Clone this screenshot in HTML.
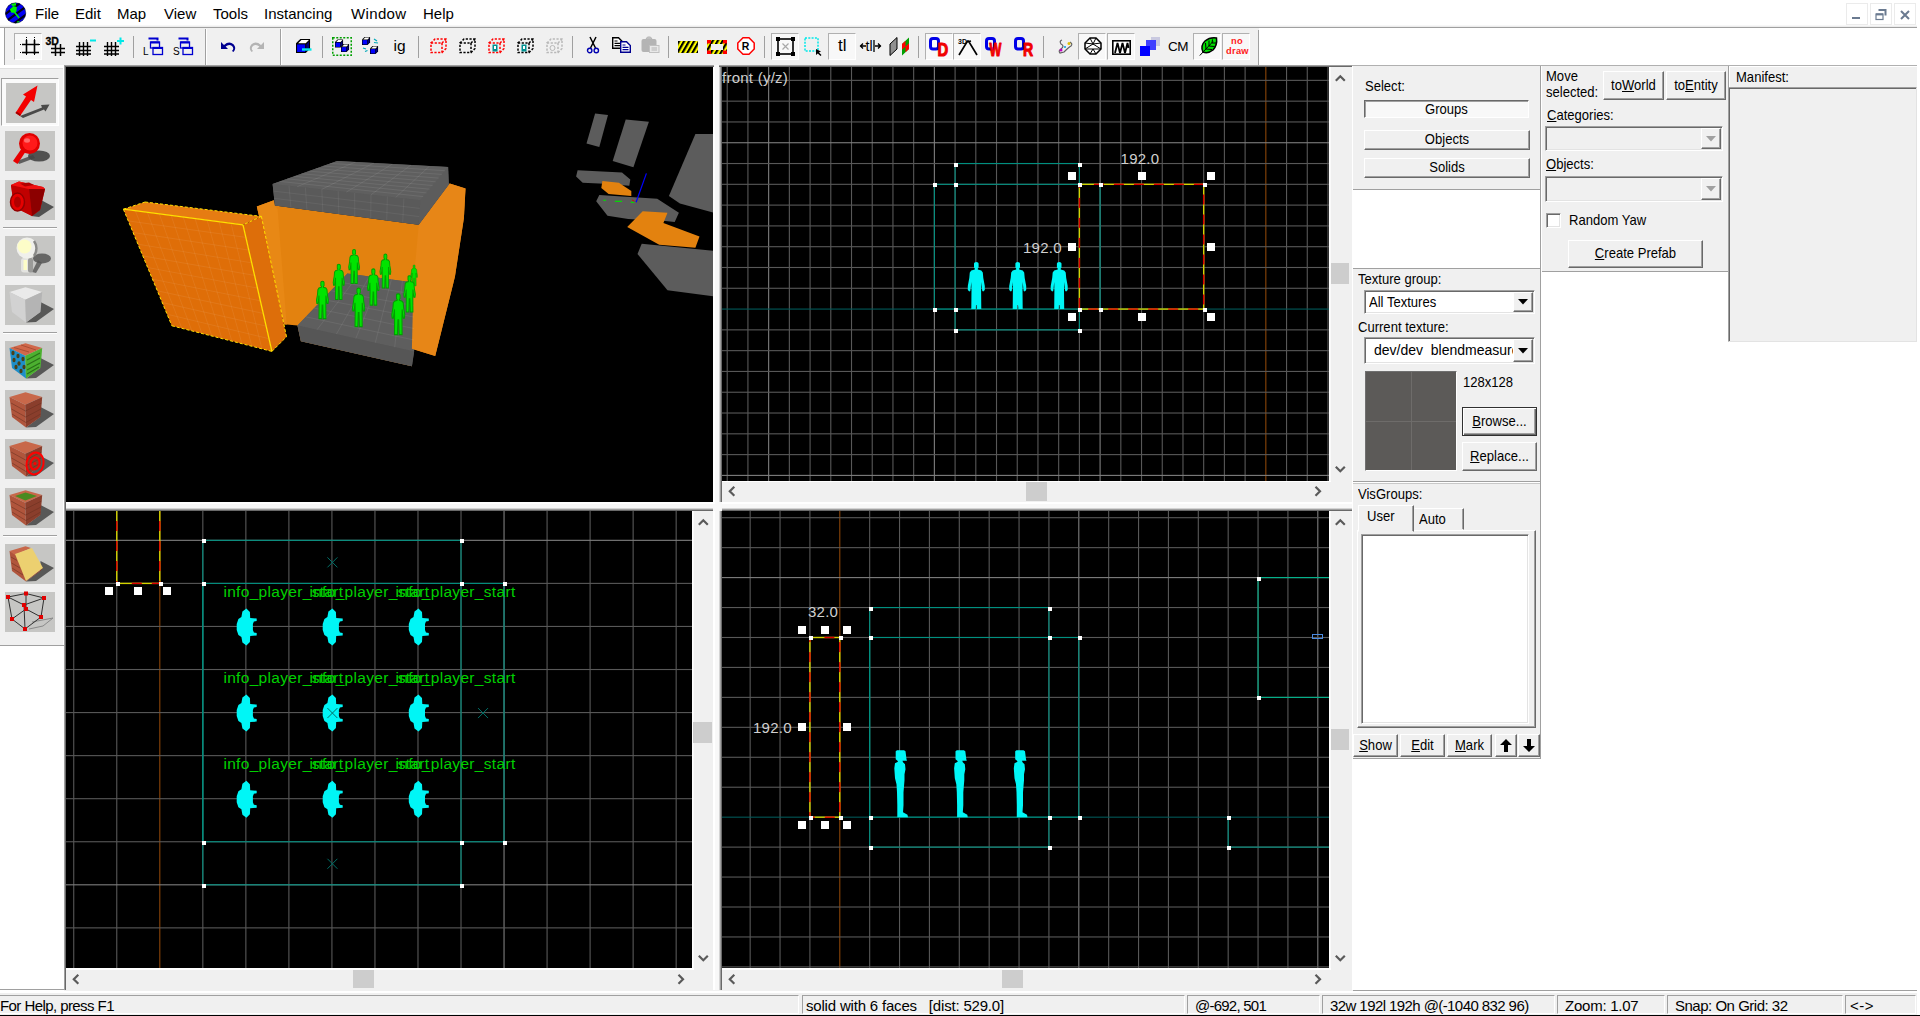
<!DOCTYPE html>
<html><head><meta charset="utf-8"><title>Hammer</title>
<style>
*{box-sizing:border-box;margin:0;padding:0}
html,body{width:1920px;height:1016px;overflow:hidden;background:#fff}
body{position:relative;font-family:"Liberation Sans",sans-serif;font-size:14px;color:#000}
.a{position:absolute}
.t{position:absolute;white-space:nowrap;line-height:1}
.menu{font-size:15px;top:6px}
.dlg{font-size:14px}
.btn{position:absolute;background:#f0f0f0;border:1px solid;border-color:#fff #696969 #696969 #fff;box-shadow:inset -1px -1px 0 #a0a0a0,inset 1px 1px 0 #e3e3e3;text-align:center;font-size:14px;white-space:nowrap}
.sunk{position:absolute;border:1px solid;border-color:#a0a0a0 #fff #fff #a0a0a0;box-shadow:inset 1px 1px 0 #696969,inset -1px -1px 0 #e3e3e3}
.vp{position:absolute;background:#000;overflow:hidden}
.sb{position:absolute;background:#f0f0f0}
.thumb{position:absolute;background:#cdcdcd}
svg{position:absolute;overflow:visible}
u{text-decoration:underline}
</style></head>
<body>
<style>
.gl{color:#d0d0d0;font-size:15px;letter-spacing:.25px}
.ent{color:#00d000;font-size:15.5px;letter-spacing:.32px}
</style>
<!-- menubar -->
<div class="a" style="left:0;top:0;width:1920px;height:27px;background:#fff"></div>
<div class="a" style="left:0;top:25px;width:1917px;height:1px;background:#f7f7f7"></div><div class="a" style="left:0;top:26px;width:1917px;height:1px;background:#ececec"></div><div class="a" style="left:0;top:27px;width:1920px;height:1px;background:#a0a0a0"></div>
<svg style="left:5px;top:2px" width="22" height="22" viewBox="5 2 22 22">
<defs><clipPath id="gl"><circle cx="15.6" cy="13" r="10.2"/></clipPath></defs>
<circle cx="15.6" cy="13" r="10.2" fill="#0000f4"/>
<g clip-path="url(#gl)"><path d="M4 15 L20 3 M5 22 L27 6 M12 25 L28 13 M2 9 L12 2" stroke="#000" stroke-width="2.2" opacity=".9"/>
<path d="M11 3.5 L16 2.8 L16 5.5 L12 6 Z M17 21.5 L19.5 21 L19 23.2 L16.8 23.4 Z" fill="#00f000"/>
<path d="M9.8 9.5 L13.5 6 L16.8 7 L16.5 11 L15.6 12.2 L19.8 17.6 L18.6 18.6 L14 12.8 L11.5 12.8 Z" fill="#00f400"/></g>
<circle cx="15.6" cy="13" r="10.2" fill="none" stroke="#000" stroke-width=".8" opacity=".55"/>
</svg>
<div class="t menu" style="left:35px">File</div>
<div class="t menu" style="left:75px">Edit</div>
<div class="t menu" style="left:117px">Map</div>
<div class="t menu" style="left:164px">View</div>
<div class="t menu" style="left:213px">Tools</div>
<div class="t menu" style="left:264px">Instancing</div>
<div class="t menu" style="left:351px;letter-spacing:.35px">Window</div>
<div class="t menu" style="left:423px">Help</div>
<div class="a" style="left:1917px;top:27px;width:3px;height:1px;background:#fff"></div>
<div class="a" style="left:1846px;top:3px;width:22px;height:22px;border:1px solid #ebebeb"></div>
<div class="a" style="left:1870px;top:3px;width:22px;height:22px;border:1px solid #ebebeb"></div>
<div class="a" style="left:1894px;top:3px;width:22px;height:22px;border:1px solid #ebebeb"></div>
<div class="a" style="left:1852px;top:17px;width:8px;height:2px;background:#6a7a90"></div>
<svg style="left:1875px;top:9px" width="12" height="11"><path d="M3.5 1 H10.5 V6.5" fill="none" stroke="#6a7a90" stroke-width="2"/><rect x="1" y="5" width="7" height="5.5" fill="#fff" stroke="#6a7a90" stroke-width="1.2"/><rect x="1" y="4.4" width="7" height="2" fill="#6a7a90"/></svg>
<svg style="left:1900px;top:10px" width="10" height="10"><path d="M1 1 L9 9 M9 1 L1 9" stroke="#6a7a90" stroke-width="2"/></svg>
<!-- toolbar -->
<div class="a" style="left:0;top:28px;width:1259px;height:37px;background:#f0f0f0"></div>
<div class="a" style="left:1258px;top:30px;width:1px;height:35px;background:#a0a0a0"></div>
<div class="a" style="left:0;top:28px;width:4px;height:37px;background:#fff"></div>
<div class="a" style="left:4px;top:28px;width:1px;height:37px;background:#a0a0a0"></div>
<div class="a" style="left:205px;top:29px;width:1px;height:36px;background:#a0a0a0"></div>
<div class="a" style="left:206px;top:29px;width:1px;height:36px;background:#fff"></div>
<div class="a" style="left:280px;top:29px;width:1px;height:36px;background:#a0a0a0"></div>
<div class="a" style="left:281px;top:29px;width:1px;height:36px;background:#fff"></div>
<style>.tbs{position:absolute;top:36px;width:1px;height:22px;background:#a0a0a0}
.tbp{position:absolute;top:33px;width:28px;height:27px;background:#f8f8f8;border:1px solid;border-color:#b0b0b0 #fff #fff #b0b0b0}
.tbt{position:absolute;white-space:nowrap;line-height:1}
</style>
<div class="tbs" style="left:133px"></div><div class="tbs" style="left:322px"></div><div class="tbs" style="left:418px"></div><div class="tbs" style="left:572px"></div><div class="tbs" style="left:668px"></div><div class="tbs" style="left:764px"></div><div class="tbs" style="left:918px"></div><div class="tbs" style="left:1043px"></div><div class="tbp" style="left:14px"></div><div class="tbp" style="left:771px"></div><div class="tbp" style="left:828px"></div><div class="tbp" style="left:925px"></div><div class="tbp" style="left:953px"></div><div class="tbp" style="left:1078px"></div><div class="tbp" style="left:1107px"></div><div class="tbp" style="left:1193px"></div><div class="tbp" style="left:1222px"></div><svg style="left:20.0px;top:37px" width="21" height="19" viewBox="0 0 21 19"><path d="M6.5 3 V17 M14.5 3 V17 M2 7.5 H19 M2 15.5 H19" stroke="#000" fill="none" stroke-width="1.6"/><path d="M6.5 0 V3 M14.5 0 V3 M0 7.5 H2 M0 15.5 H2 M19 7.5 H21 M6.5 17 V19 M14.5 17 V19" stroke="#000" fill="none" stroke-width="1" stroke-dasharray="1 1"/></svg><svg style="left:46.0px;top:37px" width="20" height="19" viewBox="0 0 20 19"><text x="-0.5" y="7.5" font-family="Liberation Sans" font-weight="bold" font-size="10.5" stroke="#000" stroke-width=".3">3D</text><path d="M9.5 7 V19 M14.5 7 V19 M5 11.5 H19 M5 15.5 H19" stroke="#000" fill="none" stroke-width="1.5"/></svg><svg style="left:76.0px;top:37px" width="20" height="19" viewBox="0 0 20 19"><path d="M3.5 5 V19 M7.5 5 V19 M11.5 5 V19 M0 9.5 H15 M0 13.5 H15 M0 17 H15" stroke="#000" fill="none" stroke-width="1.4"/><path d="M14 3.5 H20" stroke="#00e8e8" stroke-width="2"/></svg><svg style="left:104.0px;top:37px" width="20" height="19" viewBox="0 0 20 19"><path d="M3.5 5 V19 M7.5 5 V19 M11.5 5 V19 M0 9.5 H15 M0 13.5 H15 M0 17 H15" stroke="#000" fill="none" stroke-width="1.4"/><path d="M13 4 H20 M16.5 0.5 V7.5" stroke="#00e8e8" stroke-width="2"/></svg><svg style="left:142.5px;top:37px" width="20" height="19" viewBox="0 0 20 19"><g fill="#f0f0f0" stroke="#0000d0" stroke-width="1.3"><path d="M5.5 1.5 h9 v2" fill="none" stroke-width="2"/><rect x="7.5" y="5" width="9" height="6"/><path d="M7.5 5.5 h9" stroke-width="2"/><rect x="10" y="10.5" width="9.5" height="7"/><path d="M10 11 h9.5" stroke-width="2"/></g><text x="0" y="18" font-family="Liberation Sans" font-size="10">L</text></svg><svg style="left:172.5px;top:37px" width="20" height="19" viewBox="0 0 20 19"><g fill="#f0f0f0" stroke="#0000d0" stroke-width="1.3"><path d="M5.5 1.5 h9 v2" fill="none" stroke-width="2"/><rect x="7.5" y="5" width="9" height="6"/><path d="M7.5 5.5 h9" stroke-width="2"/><rect x="10" y="10.5" width="9.5" height="7"/><path d="M10 11 h9.5" stroke-width="2"/></g><text x="0" y="18" font-family="Liberation Sans" font-size="10">S</text></svg><svg style="left:220.0px;top:40px" width="17" height="13" viewBox="0 0 17 13"><path d="M1 2 L1 9 L8 9 L5.6 6.6 Q9 3.5 12 6 Q14.5 8.5 12 11 L13.5 12 Q17 8 13.5 4.2 Q9 0.5 4 5 Z" fill="#000090"/></svg><svg style="left:248.0px;top:40px" width="17" height="13" viewBox="0 0 17 13"><path transform="translate(17,0) scale(-1,1)" d="M1 2 L1 9 L8 9 L5.6 6.6 Q9 3.5 12 6 Q14.5 8.5 12 11 L13.5 12 Q17 8 13.5 4.2 Q9 0.5 4 5 Z" fill="#b4b4b4"/></svg><svg style="left:296.3px;top:38px" width="16" height="16" viewBox="0 0 16 16"><g transform="translate(0,1) scale(1.08)"><path d="M0 4 L4 0 L13 0 L13 9 L9 13 L0 13 Z" fill="#000"/><path d="M1 5 H8.5 V12 H1 Z" fill="#0000ff"/><path d="M2 4 L5 1 L12 1 L9 4 Z" fill="#fff"/><path d="M9.5 5 L12 2.3 V8.5 L9.5 11.5 Z" fill="#000080"/></g><path d="M6 11.5 H15.5" stroke="#00e8e8" stroke-width="2.4"/></svg><svg style="left:331.8px;top:37px" width="20" height="19" viewBox="0 0 20 19"><rect x="0.75" y="0.75" width="18.5" height="17.5" fill="none" stroke="#00a000" stroke-width="1.5" stroke-dasharray="2 1.5"/><g transform="translate(3,2.5) scale(0.62)"><path d="M0 4 L4 0 L13 0 L13 9 L9 13 L0 13 Z" fill="#000"/><path d="M1 5 H8.5 V12 H1 Z" fill="#0000ff"/><path d="M2 4 L5 1 L12 1 L9 4 Z" fill="#fff"/><path d="M9.5 5 L12 2.3 V8.5 L9.5 11.5 Z" fill="#000080"/></g><g transform="translate(9,7) scale(0.62)"><path d="M0 4 L4 0 L13 0 L13 9 L9 13 L0 13 Z" fill="#000"/><path d="M1 5 H8.5 V12 H1 Z" fill="#0000ff"/><path d="M2 4 L5 1 L12 1 L9 4 Z" fill="#fff"/><path d="M9.5 5 L12 2.3 V8.5 L9.5 11.5 Z" fill="#000080"/></g></svg><svg style="left:361.5px;top:37px" width="18" height="19" viewBox="0 0 18 19"><g transform="translate(0,0) scale(0.62)"><path d="M0 4 L4 0 L13 0 L13 9 L9 13 L0 13 Z" fill="#000"/><path d="M1 5 H8.5 V12 H1 Z" fill="#0000ff"/><path d="M2 4 L5 1 L12 1 L9 4 Z" fill="#fff"/><path d="M9.5 5 L12 2.3 V8.5 L9.5 11.5 Z" fill="#000080"/></g><g transform="translate(8,9) scale(0.62)"><path d="M0 4 L4 0 L13 0 L13 9 L9 13 L0 13 Z" fill="#000"/><path d="M1 5 H8.5 V12 H1 Z" fill="#0000ff"/><path d="M2 4 L5 1 L12 1 L9 4 Z" fill="#fff"/><path d="M9.5 5 L12 2.3 V8.5 L9.5 11.5 Z" fill="#000080"/></g><path d="M12 2 l3 2 M12 5.5 l4 0.5 M1 11 l3 1 M3 14.5 l2.5 -1" stroke="#00a8b8" stroke-width="1.2"/></svg><div class="tbt" style="left:393.5px;top:38px;font-size:15.5px">ig</div><svg style="left:430.3px;top:38px" width="17" height="16" viewBox="0 0 17 16"><g fill="none" stroke="#ff0000" stroke-width="1.5" stroke-dasharray="2.2 1.5"><rect x="1" y="5" width="11" height="9.5"/><path d="M1 5 L5 1 H16 V10.5 L12 14.5 M12 5 L16 1"/></g></svg><svg style="left:459.0px;top:38px" width="17" height="16" viewBox="0 0 17 16"><g fill="none" stroke="#000" stroke-width="1.5" stroke-dasharray="2.2 1.5"><rect x="1" y="5" width="11" height="9.5"/><path d="M1 5 L5 1 H16 V10.5 L12 14.5 M12 5 L16 1"/></g></svg><svg style="left:487.8px;top:38px" width="17" height="16" viewBox="0 0 17 16"><g fill="none" stroke="#ff0000" stroke-width="1.5" stroke-dasharray="2.2 1.5"><rect x="1" y="5" width="11" height="9.5"/><path d="M1 5 L5 1 H16 V10.5 L12 14.5 M12 5 L16 1"/></g><rect x="4.5" y="6.5" width="5" height="7" fill="#009090"/><rect x="6" y="8" width="2" height="3" fill="#fff"/></svg><svg style="left:516.7px;top:38px" width="17" height="16" viewBox="0 0 17 16"><g fill="none" stroke="#000" stroke-width="1.5" stroke-dasharray="2.2 1.5"><rect x="1" y="5" width="11" height="9.5"/><path d="M1 5 L5 1 H16 V10.5 L12 14.5 M12 5 L16 1"/></g><rect x="4.5" y="6.5" width="5" height="7" fill="#009090"/><rect x="6" y="8" width="2" height="3" fill="#fff"/></svg><svg style="left:545.5px;top:38px" width="17" height="16" viewBox="0 0 17 16"><g fill="none" stroke="#b8b8b8" stroke-width="1.5" stroke-dasharray="2.2 1.5"><rect x="1" y="5" width="11" height="9.5"/><path d="M1 5 L5 1 H16 V10.5 L12 14.5 M12 5 L16 1"/></g><circle cx="6.5" cy="10" r="2.5" fill="none" stroke="#b8b8b8"/></svg><svg style="left:586.5px;top:37px" width="12" height="17" viewBox="0 0 12 17"><path d="M3 0 L8.5 11 M9 0 L3.5 11" stroke="#000" stroke-width="1.5" fill="none"/><circle cx="2.7" cy="13.5" r="2.2" fill="none" stroke="#0000b0" stroke-width="1.4"/><circle cx="9.3" cy="13.5" r="2.2" fill="none" stroke="#0000b0" stroke-width="1.4"/></svg><svg style="left:611.7px;top:37px" width="19" height="16" viewBox="0 0 19 16"><g transform="translate(0,0)"><path d="M0.7 0.7 H6.5 L10.3 4.5 V11.3 H0.7 Z" fill="#fff" stroke="#000" stroke-width="1.4"/><path d="M2.5 4 H5.5 M2.5 6.3 H8.5 M2.5 8.6 H8.5" stroke="#000" stroke-width="1.2"/></g><g transform="translate(8,4)"><path d="M0.7 0.7 H6.5 L10.3 4.5 V11.3 H0.7 Z" fill="#fff" stroke="#000090" stroke-width="1.4"/><path d="M2.5 4 H5.5 M2.5 6.3 H8.5 M2.5 8.6 H8.5" stroke="#000090" stroke-width="1.2"/></g></svg><svg style="left:640.8px;top:37px" width="19" height="16" viewBox="0 0 19 16"><rect x="0.5" y="2" width="15" height="13" rx="2" fill="#b4b4b4"/><path d="M5 2 L6.5 0 H9.5 L11 2 Z" fill="#c8c8c8" stroke="#b4b4b4"/><rect x="8.5" y="8.5" width="9.5" height="7" fill="#e8e8e8" stroke="#c0c0c0"/><path d="M10.5 11 H16 M10.5 13 H16" stroke="#b4b4b4"/></svg><svg style="left:678.4px;top:41px" width="20" height="12" viewBox="0 0 20 12"><defs><pattern id="hz" width="5" height="5" patternUnits="userSpaceOnUse" patternTransform="skewX(-30)"><rect width="5" height="5" fill="#ffff00"/><rect width="2.5" height="5" fill="#000"/></pattern></defs><rect x="0" y="0" width="20" height="12" fill="url(#hz)"/></svg><svg style="left:706.9px;top:40px" width="20" height="14" viewBox="0 0 20 14"><rect x="0" y="0" width="20" height="14" fill="url(#hz)"/><rect x="4" y="4" width="12" height="6" fill="#f0f0f0"/><g fill="#ff0000"><rect x="0" y="0" width="4" height="3.5"/><rect x="16" y="0" width="4" height="3.5"/><rect x="0" y="10.5" width="4" height="3.5"/><rect x="16" y="10.5" width="4" height="3.5"/></g></svg><svg style="left:736.8px;top:37px" width="18" height="18" viewBox="0 0 18 18"><path d="M6 0.8 H12 L17.2 6 V12 L12 17.2 H6 L0.8 12 V6 Z" fill="#fff" stroke="#ff0000" stroke-width="1.5"/><text x="4.8" y="13.2" font-family="Liberation Sans" font-weight="bold" font-size="10.5">R</text></svg><svg style="left:776.0px;top:37px" width="19" height="19" viewBox="0 0 19 19"><rect x="2" y="2" width="15" height="15" fill="none" stroke="#000" stroke-width="1.6"/><g fill="#000"><rect x="0" y="0" width="4" height="4"/><rect x="15" y="0" width="4" height="4"/><rect x="0" y="15" width="4" height="4"/><rect x="15" y="15" width="4" height="4"/></g><path d="M6.5 6.5 L12.5 12.5 M12.5 6.5 L6.5 12.5" stroke="#a8a8a8" stroke-width="1.2"/></svg><svg style="left:804.0px;top:37px" width="18" height="19" viewBox="0 0 18 19"><rect x="1" y="1" width="13" height="13" fill="none" stroke="#00e8e8" stroke-width="1.5" stroke-dasharray="2 1.3"/><path d="M12 12 L12 18 L13.8 16.5 L16.5 19 L17.5 18 L15 15.5 L17 14.5 Z" fill="#000"/></svg><div class="tbt" style="left:838px;top:37px;font-size:17px">tl</div><svg style="left:860.1px;top:39px" width="21" height="14" viewBox="0 0 21 14"><path d="M0 7 H6 M15 7 H21 M3 4.5 L0.5 7 L3 9.5 M18 4.5 L20.5 7 L18 9.5" stroke="#000" stroke-width="1.3" fill="none"/><text x="5.5" y="12" font-family="Liberation Sans" font-size="14">tl</text><path d="M14 1 V13" stroke="#000" stroke-width="1.3"/></svg><svg style="left:888.8px;top:37px" width="21" height="19" viewBox="0 0 21 19"><path d="M1 7 L8 0.5 V12 L1 18.5 Z" fill="#909090" stroke="#000" stroke-width="1"/><path d="M13 7 L20 0.5 V12 L13 18.5 Z" fill="#00a000"/><path d="M13 7 L16.5 3.7 V9.5 L13 12.7 Z M16.5 9.5 L20 6.3 V12 L16.5 15.3 Z" fill="#ff0000"/></svg><svg style="left:929.2px;top:36px" width="21" height="21" viewBox="0 0 21 21"><rect x="1.5" y="2.5" width="8" height="10.5" rx="2.5" fill="none" stroke="#0000e8" stroke-width="3"/><text transform="translate(8.5,20.3) scale(0.78,1)" font-family="Liberation Sans" font-weight="bold" font-size="19" fill="#f00000" stroke="#f00000" stroke-width="1.1" stroke-linejoin="round">D</text></svg><svg style="left:957.5px;top:37px" width="20" height="19" viewBox="0 0 20 19"><text x="0" y="6.5" font-family="Liberation Sans" font-weight="bold" font-size="7">3D</text><path d="M1 18 L9.5 4 L10.5 4 L19 18 M9 5 L13 4" stroke="#000" stroke-width="1.7" fill="none"/></svg><svg style="left:985.3px;top:36px" width="21" height="21" viewBox="0 0 21 21"><rect x="1.5" y="2.5" width="8" height="10.5" rx="2.5" fill="none" stroke="#0000e8" stroke-width="3"/><text transform="translate(4.5,20.3) scale(0.66,1)" font-family="Liberation Sans" font-weight="bold" font-size="19" fill="#f00000" stroke="#f00000" stroke-width="1.1" stroke-linejoin="round">W</text></svg><svg style="left:1013.9px;top:36px" width="21" height="21" viewBox="0 0 21 21"><rect x="1.5" y="2.5" width="8" height="10.5" rx="2.5" fill="none" stroke="#0000e8" stroke-width="3"/><text transform="translate(9,20.3) scale(0.74,1)" font-family="Liberation Sans" font-weight="bold" font-size="19" fill="#f00000" stroke="#f00000" stroke-width="1.1" stroke-linejoin="round">R</text></svg><svg style="left:1056.5px;top:38px" width="16" height="17" viewBox="0 0 16 17"><path d="M5 2 Q2 3 4 6 Q8 8 4 11 Q1 13 3 15 L7 14 Q12 9 14 8 Q16 6 13 4" fill="none" stroke="#606060" stroke-width="1.2"/><circle cx="4" cy="12" r="1.5" fill="#c000c0"/><circle cx="12" cy="5.5" r="1.5" fill="#e0c000"/><circle cx="8" cy="9" r="1" fill="#00a0e0"/></svg><svg style="left:1084.3px;top:37px" width="18" height="18" viewBox="0 0 18 18"><path d="M6 1 H12 L17 6 V12 L12 17 H6 L1 12 V6 Z" fill="#fff" stroke="#000" stroke-width="1.5"/><path d="M6 1 L9 7 L12 1 M1 6 L9 7 L17 6 M1 12 L9 7 M17 12 L9 7 M6 17 L9 12 L12 17 M1 12 L9 12 L17 12" stroke="#000" stroke-width="1" fill="none"/></svg><svg style="left:1112.2px;top:40px" width="19" height="15" viewBox="0 0 19 15"><rect x="0.8" y="0.8" width="17.4" height="13.4" fill="#fff" stroke="#000" stroke-width="1.6"/><path d="M3 13 L5.5 3 L8 13 L10.5 3 L13 13 L15.5 3 L16.5 8" stroke="#000" stroke-width="1.8" fill="none"/></svg><svg style="left:1139.7px;top:37px" width="20" height="19" viewBox="0 0 20 19"><rect x="11" y="0" width="9" height="9" fill="#b8b8d8" opacity=".7"/><rect x="6" y="3" width="10" height="10" fill="#4040ff"/><rect x="0" y="9" width="10" height="10" fill="#0000ff"/></svg><div class="tbt" style="left:1168px;top:40px;font-size:13.5px;letter-spacing:-.5px">CM</div><svg style="left:1199.1px;top:37px" width="19" height="19" viewBox="0 0 19 19"><path d="M4 15 Q1 9 6 4 Q11 0 17.5 1 Q18.5 8 14 13 Q9 17 4 15 Z" fill="#00e000" stroke="#000" stroke-width="1.5"/><path d="M0.8 18.5 L5 14 L14 4.5 M7 12 L6.5 6 M10 9 L10 3.5 M7 12 L13 12.5 M10 9 L15.5 9.5 M13 6 L13.5 2.5 M13 6 L17 6" stroke="#000" stroke-width="1" fill="none"/></svg><div class="tbt" style="left:1226px;top:36px;width:22px;text-align:center;font-size:9.3px;font-weight:bold;color:#ff2020;line-height:9.5px;padding-top:1px;white-space:normal;letter-spacing:.3px">no draw</div><!-- left tools -->
<div class="a" style="left:0;top:66px;width:64px;height:579px;background:#f0f0f0"></div>
<div class="a" style="left:0;top:66px;width:64px;height:1px;background:#fff"></div>
<div class="a" style="left:0;top:67px;width:64px;height:1px;background:#fff"></div>
<div class="a" style="left:0;top:68px;width:64px;height:1px;background:#e0e0e0"></div>
<div class="a" style="left:0;top:645px;width:64px;height:1px;background:#a0a0a0"></div>
<div class="a" style="left:1px;top:78px;width:58px;height:48px;background:#fafafa;border:1px solid;border-color:#a0a0a0 #fff #fff #a0a0a0"></div>
<div class="a" style="left:3px;top:227px;width:54px;height:1px;background:#a0a0a0"></div><div class="a" style="left:3px;top:228px;width:54px;height:1px;background:#fff"></div><div class="a" style="left:3px;top:332px;width:54px;height:1px;background:#a0a0a0"></div><div class="a" style="left:3px;top:333px;width:54px;height:1px;background:#fff"></div><div class="a" style="left:3px;top:535px;width:54px;height:1px;background:#a0a0a0"></div><div class="a" style="left:3px;top:536px;width:54px;height:1px;background:#fff"></div><svg style="left:6px;top:83px" width="50" height="40" viewBox="0 0 50 40"><rect width="50" height="40" fill="#c6c6c4"/><polygon points="14,33 36,24.5 35,22 43.5,21.5 39.5,28.5 38,26.5 17,35" fill="#3c3c3c" opacity=".9"/><polygon points="9.5,30 20,13.5 17,11.5 31.5,2.5 28,19 25,17 14,33" fill="#f40000"/><polygon points="9.5,30 14,33 15,31.5 10.5,28.5" fill="#a00000"/></svg><svg style="left:5px;top:131px" width="50" height="40" viewBox="0 0 50 40"><rect width="50" height="40" fill="#c6c6c4"/><ellipse cx="34" cy="25" rx="11" ry="5.5" fill="#444" opacity=".9"/><polygon points="14,33 30,27 28,24 12,30" fill="#444" opacity=".8"/><polygon points="8,30 17,17 21,20 12.5,33" fill="#e80000"/><circle cx="24.5" cy="12.5" r="10.5" fill="#e00000"/><circle cx="25" cy="12" r="7.5" fill="#ff1a1a"/><ellipse cx="22" cy="9.5" rx="3" ry="2.2" fill="#ff6a6a"/></svg><svg style="left:5px;top:180px" width="50" height="40" viewBox="0 0 50 40"><rect width="50" height="40" fill="#c6c6c4"/><polygon points="36,20 49,27 34,37 26,36" fill="#444" opacity=".9"/><polygon points="6,5 14,1.5 38,7 40,9 35,30 27,36 9,27" fill="#d80000"/><polygon points="6,5 24,9 27,36 9,27" fill="#c00000"/><polygon points="24,9 40,9 35,30 27,36" fill="#8c0000"/><polygon points="6,5 14,1.5 38,7 40,9 24,9" fill="#f01010"/><ellipse cx="12.5" cy="22" rx="7" ry="9" fill="#e60000" stroke="#900000" stroke-width="1.5"/><ellipse cx="12.5" cy="22" rx="3.5" ry="5.5" fill="#b00000"/><polygon points="15,3.5 24,2.5 29,5 20,6.5" fill="#b00000"/></svg><svg style="left:5px;top:236px" width="50" height="40" viewBox="0 0 50 40"><rect width="50" height="40" fill="#c6c6c4"/><ellipse cx="37" cy="22.5" rx="9" ry="5" fill="#555" opacity=".85"/><polygon points="27,36 33,24 37,27 31,37" fill="#555" opacity=".8"/><rect x="16" y="22" width="11" height="14.5" rx="3" fill="#e4e4e0"/><rect x="23" y="22" width="5" height="14.5" rx="2" fill="#9a9a98"/><circle cx="22" cy="12" r="10.5" fill="#f0f0ec"/><circle cx="19.5" cy="10.5" r="7" fill="#fdfdc8"/><path d="M29 5 Q34 12 29 20" stroke="#8a8a88" stroke-width="2.5" fill="none"/><rect x="18.5" y="24" width="3.5" height="10" fill="#fdfdc8"/></svg><svg style="left:5px;top:285px" width="50" height="40" viewBox="0 0 50 40"><rect width="50" height="40" fill="#c6c6c4"/><polygon points="35.5,17 49,24 31,37 21,37.5 35,27" fill="#444" opacity=".85"/><polygon points="4.5,7 20.5,2.2 37.2,7 20.2,14.7" fill="#eaeaea"/><polygon points="4.5,7 20.2,14.7 21,37.5 7,27" fill="#d2d2d2"/><polygon points="20.2,14.7 37.2,7 35.5,27 21,37.5" fill="#b4b4b4"/></svg><svg style="left:5px;top:341px" width="50" height="40" viewBox="0 0 50 40"><rect width="50" height="40" fill="#c6c6c4"/><polygon points="35.5,17 49,24 31,37 21,37.5 35,27" fill="#444" opacity=".85"/><polygon points="4.5,7 20.5,2.2 37.2,7 20.2,14.7" fill="#d0684a"/><polygon points="4.5,7 20.2,14.7 21,37.5 7,27" fill="#1e8ec8"/><polygon points="20.2,14.7 37.2,7 35.5,27 21,37.5" fill="#4cb030"/><g fill="#4a4018"><ellipse cx="8" cy="12" rx="1.6" ry="2.2"/><ellipse cx="13" cy="15" rx="1.6" ry="2.2"/><ellipse cx="18" cy="18" rx="1.6" ry="2.2"/><ellipse cx="9" cy="19" rx="1.6" ry="2.2"/><ellipse cx="14" cy="22.5" rx="1.6" ry="2.2"/><ellipse cx="19" cy="26" rx="1.6" ry="2.2"/><ellipse cx="11" cy="26" rx="1.6" ry="2.2"/><ellipse cx="16" cy="30" rx="1.6" ry="2.2"/></g><path d="M22 19 L35 12 M22 24 L35 17 M22 29 L35 22 M22 33 L34 26" stroke="#2a7018" stroke-width="1.2"/><path d="M9 6.5 L24 11 M16 4 L31 9" stroke="#a04830" stroke-width=".8"/></svg><svg style="left:5px;top:390px" width="50" height="40" viewBox="0 0 50 40"><rect width="50" height="40" fill="#c6c6c4"/><polygon points="35.5,17 49,24 31,37 21,37.5 35,27" fill="#444" opacity=".85"/><polygon points="4.5,7 20.5,2.2 37.2,7 20.2,14.7" fill="#c8684a"/><polygon points="4.5,7 20.2,14.7 21,37.5 7,27" fill="#b0553c"/><polygon points="20.2,14.7 37.2,7 35.5,27 21,37.5" fill="#8a3e2c"/><path d="M6 13 L20.5 21 L36.5 13 M6.5 19 L20.7 27 L36 19 M7 24 L20.9 32.5 L35.7 24" stroke="#6a3020" stroke-width=".8" fill="none" opacity=".7"/></svg><svg style="left:5px;top:439px" width="50" height="40" viewBox="0 0 50 40"><rect width="50" height="40" fill="#c6c6c4"/><polygon points="35.5,17 49,24 31,37 21,37.5 35,27" fill="#444" opacity=".85"/><polygon points="4.5,7 20.5,2.2 37.2,7 20.2,14.7" fill="#c8684a"/><polygon points="4.5,7 20.2,14.7 21,37.5 7,27" fill="#b0553c"/><polygon points="20.2,14.7 37.2,7 35.5,27 21,37.5" fill="#8a3e2c"/><path d="M6 13 L20.5 21 L36.5 13 M6.5 19 L20.7 27 L36 19 M7 24 L20.9 32.5 L35.7 24" stroke="#6a3020" stroke-width=".8" fill="none" opacity=".7"/><g fill="none" stroke="#ff0000" stroke-width="2"><ellipse cx="30" cy="24.5" rx="8.5" ry="11" transform="rotate(12 30 24.5)"/><ellipse cx="30" cy="24.5" rx="4.5" ry="6" transform="rotate(12 30 24.5)"/></g><circle cx="30" cy="24.5" r="1.5" fill="#ff0000"/></svg><svg style="left:5px;top:488px" width="50" height="40" viewBox="0 0 50 40"><rect width="50" height="40" fill="#c6c6c4"/><polygon points="35.5,17 49,24 31,37 21,37.5 35,27" fill="#444" opacity=".85"/><polygon points="4.5,7 20.5,2.2 37.2,7 20.2,14.7" fill="#c8684a"/><polygon points="4.5,7 20.2,14.7 21,37.5 7,27" fill="#b0553c"/><polygon points="20.2,14.7 37.2,7 35.5,27 21,37.5" fill="#8a3e2c"/><path d="M6 13 L20.5 21 L36.5 13 M6.5 19 L20.7 27 L36 19 M7 24 L20.9 32.5 L35.7 24" stroke="#6a3020" stroke-width=".8" fill="none" opacity=".7"/><polygon points="10,8 20.5,4.5 32,8 20.3,12.5" fill="#4a8a20"/></svg><svg style="left:5px;top:544px" width="50" height="40" viewBox="0 0 50 40"><rect width="50" height="40" fill="#c6c6c4"/><polygon points="35.5,17 49,24 31,37 21,37.5 35,27" fill="#444" opacity=".85"/><polygon points="4.5,7 20.2,14.7 21,37.5 7,27" fill="#b0553c"/><polygon points="4.5,7 20.5,2.2 26,4 10,11" fill="#c8684a"/><polygon points="10,10 27,4 38,24 21,37" fill="#ecd070"/><polygon points="21,37 38,24 35.5,27 21,37.5" fill="#8a3e2c"/><path d="M6 13 L12 16.5 M6.5 19 L15 24 M7 24 L18 31" stroke="#6a3020" stroke-width=".8" opacity=".7"/></svg><svg style="left:5px;top:592px" width="50" height="40" viewBox="0 0 50 40"><rect width="50" height="40" fill="#c6c6c4"/><path d="M27,30 L48,26 L38,34 L24,37" stroke="#8a8a8a" stroke-width="1" fill="none"/><path d="M3 5 L21 1.5 L39 6 L19 13 Z M3 5 L7 27 L20 37 L19 13 M39 6 L36 25 L20 37 M21 1.5 L21 17 L7 27 M21 17 L36 25" stroke="#303030" stroke-width="1" fill="none"/><rect x="1" y="3" width="4" height="4" fill="#e00000"/><rect x="19" y="-0.5" width="4" height="4" fill="#e00000"/><rect x="37" y="4" width="4" height="4" fill="#e00000"/><rect x="17" y="11" width="4" height="4" fill="#e00000"/><rect x="5" y="25" width="4" height="4" fill="#e00000"/><rect x="19" y="15" width="4" height="4" fill="#e00000"/><rect x="34" y="23" width="4" height="4" fill="#e00000"/><rect x="18" y="35" width="4" height="4" fill="#e00000"/></svg><!-- viewports -->
<div class="a" style="left:64px;top:65px;width:1288px;height:926px;background:#f0f0f0"></div><div class="vp" style="left:66px;top:67px;width:647px;height:435px"><svg width="647" height="435"><polygon points="190.8,139.6 207.8,133.3 208.9,138.5 352.7,157.7 382.8,117.4 383.7,116.5 399.5,121.5 397.9,150.9 388.9,209.8 369.2,289.0 345.9,281.8 345.9,299.2 234.9,274.3 231.5,258.5 218.0,257.3" fill="#e3820f" /><polygon points="190.8,139.6 207.8,133.3 208.9,138.5 211.6,141.9 220.7,257.8 218.0,257.3" fill="#e88815" /><polygon points="281.4,206.4 347.5,215.4 348.1,284.5 345.9,299.2 234.9,274.3 231.5,258.5" fill="#5a5a5a" /><polygon points="281.4,206.4 347.5,215.4 348.1,284.5 231.5,258.5" fill="#5e5e5e" /><polygon points="231.5,258.5 348.1,284.5 345.9,299.2 234.9,274.3" fill="#565656" /><polygon points="352.7,157.7 382.8,117.4 383.7,116.5 399.5,121.5 397.9,150.9 388.9,209.8 369.2,289.0 345.9,281.8 347.5,215.4" fill="#e78617" /><polygon points="206.6,117.0 271.2,93.9 382.1,100.0 382.8,117.4 352.7,157.7 208.9,138.5" fill="#5c5c5c" /><polygon points="206.6,117.0 271.2,93.9 382.1,100.0 354.3,133.3" fill="#5f5f5f" /><polygon points="206.6,117.0 354.3,133.3 352.7,157.7 208.9,138.5" fill="#5a5a5a" /><polygon points="354.3,133.3 382.1,100.0 382.8,117.4 352.7,157.7" fill="#5c5c5c" /><g stroke="#fff" stroke-opacity="0.08" stroke-width="1" fill="none"><path d="M213.8 114.4 L357.3 129.6"/><path d="M221.0 111.8 L360.4 125.9"/><path d="M228.1 109.3 L363.5 122.2"/><path d="M235.3 106.7 L366.6 118.5"/><path d="M242.5 104.1 L369.7 114.8"/><path d="M249.7 101.6 L372.8 111.1"/><path d="M256.8 99.0 L375.9 107.4"/><path d="M264.0 96.4 L379.0 103.7"/><path d="M231.2 119.7 L289.7 94.9"/><path d="M255.8 122.4 L308.1 95.9"/><path d="M280.4 125.1 L326.6 96.9"/><path d="M305.0 127.8 L345.1 97.9"/><path d="M329.6 130.5 L363.6 99.0"/></g><g stroke="#fff" stroke-opacity="0.06" stroke-width="1" fill="none"><path d="M223.0 118.8 L224.9 140.6"/><path d="M239.4 120.6 L240.9 142.7"/><path d="M255.8 122.4 L256.8 144.9"/><path d="M272.2 124.2 L272.8 147.0"/><path d="M288.6 126.0 L288.8 149.2"/><path d="M305.0 127.8 L304.7 151.3"/><path d="M321.4 129.6 L320.7 153.4"/><path d="M337.9 131.4 L336.7 155.6"/><path d="M207.4 124.1 L353.7 141.4"/><path d="M208.1 131.3 L353.2 149.6"/></g><g stroke="#fff" stroke-opacity="0.07" stroke-width="1" fill="none"><path d="M292.4 207.9 L251.0 262.8"/><path d="M303.4 209.4 L270.4 267.1"/><path d="M314.4 210.9 L289.8 271.5"/><path d="M325.4 212.4 L309.3 275.8"/><path d="M336.4 213.9 L328.7 280.2"/><path d="M273.0 215.1 L347.6 227.0"/><path d="M264.7 223.7 L347.7 238.5"/><path d="M256.4 232.4 L347.8 250.0"/><path d="M248.1 241.1 L347.9 261.5"/><path d="M239.8 249.8 L348.0 273.0"/></g><path transform="translate(282.7,182.6) scale(0.636,0.723)" d="M6.2 1.5 Q6.2 0 8.5 0 Q10.8 0 10.8 1.5 L10.8 5.5 L10 6.5 L10 7.5 L13.5 8.5 L15 10.5 L15.5 16 L17 24 L16.5 28 L15 28 L14 22 L13.5 18 L13.3 28 L13.5 47 L9.6 47 L9 30 L8 30 L7.4 47 L3.5 47 L3.7 28 L3.5 18 L3 22 L2 28 L0.5 28 L0 24 L1.5 16 L2 10.5 L3.5 8.5 L7 7.5 L7 6.5 L6.2 5.5 Z" fill="#00e400" stroke="#00a000" stroke-width="1.4"/><path transform="translate(314.0,187.1) scale(0.636,0.723)" d="M6.2 1.5 Q6.2 0 8.5 0 Q10.8 0 10.8 1.5 L10.8 5.5 L10 6.5 L10 7.5 L13.5 8.5 L15 10.5 L15.5 16 L17 24 L16.5 28 L15 28 L14 22 L13.5 18 L13.3 28 L13.5 47 L9.6 47 L9 30 L8 30 L7.4 47 L3.5 47 L3.7 28 L3.5 18 L3 22 L2 28 L0.5 28 L0 24 L1.5 16 L2 10.5 L3.5 8.5 L7 7.5 L7 6.5 L6.2 5.5 Z" fill="#00e400" stroke="#00a000" stroke-width="1.4"/><path transform="translate(344.8,198.0) scale(0.390,0.443)" d="M6.2 1.5 Q6.2 0 8.5 0 Q10.8 0 10.8 1.5 L10.8 5.5 L10 6.5 L10 7.5 L13.5 8.5 L15 10.5 L15.5 16 L17 24 L16.5 28 L15 28 L14 22 L13.5 18 L13.3 28 L13.5 47 L9.6 47 L9 30 L8 30 L7.4 47 L3.5 47 L3.7 28 L3.5 18 L3 22 L2 28 L0.5 28 L0 24 L1.5 16 L2 10.5 L3.5 8.5 L7 7.5 L7 6.5 L6.2 5.5 Z" fill="#00e400" stroke="#00a000" stroke-width="1.4"/><path transform="translate(267.2,197.3) scale(0.657,0.747)" d="M6.2 1.5 Q6.2 0 8.5 0 Q10.8 0 10.8 1.5 L10.8 5.5 L10 6.5 L10 7.5 L13.5 8.5 L15 10.5 L15.5 16 L17 24 L16.5 28 L15 28 L14 22 L13.5 18 L13.3 28 L13.5 47 L9.6 47 L9 30 L8 30 L7.4 47 L3.5 47 L3.7 28 L3.5 18 L3 22 L2 28 L0.5 28 L0 24 L1.5 16 L2 10.5 L3.5 8.5 L7 7.5 L7 6.5 L6.2 5.5 Z" fill="#00e400" stroke="#00a000" stroke-width="1.4"/><path transform="translate(301.6,201.9) scale(0.678,0.771)" d="M6.2 1.5 Q6.2 0 8.5 0 Q10.8 0 10.8 1.5 L10.8 5.5 L10 6.5 L10 7.5 L13.5 8.5 L15 10.5 L15.5 16 L17 24 L16.5 28 L15 28 L14 22 L13.5 18 L13.3 28 L13.5 47 L9.6 47 L9 30 L8 30 L7.4 47 L3.5 47 L3.7 28 L3.5 18 L3 22 L2 28 L0.5 28 L0 24 L1.5 16 L2 10.5 L3.5 8.5 L7 7.5 L7 6.5 L6.2 5.5 Z" fill="#00e400" stroke="#00a000" stroke-width="1.4"/><path transform="translate(337.8,208.7) scale(0.678,0.771)" d="M6.2 1.5 Q6.2 0 8.5 0 Q10.8 0 10.8 1.5 L10.8 5.5 L10 6.5 L10 7.5 L13.5 8.5 L15 10.5 L15.5 16 L17 24 L16.5 28 L15 28 L14 22 L13.5 18 L13.3 28 L13.5 47 L9.6 47 L9 30 L8 30 L7.4 47 L3.5 47 L3.7 28 L3.5 18 L3 22 L2 28 L0.5 28 L0 24 L1.5 16 L2 10.5 L3.5 8.5 L7 7.5 L7 6.5 L6.2 5.5 Z" fill="#00e400" stroke="#00a000" stroke-width="1.4"/><path transform="translate(250.5,214.3) scale(0.699,0.795)" d="M6.2 1.5 Q6.2 0 8.5 0 Q10.8 0 10.8 1.5 L10.8 5.5 L10 6.5 L10 7.5 L13.5 8.5 L15 10.5 L15.5 16 L17 24 L16.5 28 L15 28 L14 22 L13.5 18 L13.3 28 L13.5 47 L9.6 47 L9 30 L8 30 L7.4 47 L3.5 47 L3.7 28 L3.5 18 L3 22 L2 28 L0.5 28 L0 24 L1.5 16 L2 10.5 L3.5 8.5 L7 7.5 L7 6.5 L6.2 5.5 Z" fill="#00e400" stroke="#00a000" stroke-width="1.4"/><path transform="translate(286.5,221.1) scale(0.721,0.819)" d="M6.2 1.5 Q6.2 0 8.5 0 Q10.8 0 10.8 1.5 L10.8 5.5 L10 6.5 L10 7.5 L13.5 8.5 L15 10.5 L15.5 16 L17 24 L16.5 28 L15 28 L14 22 L13.5 18 L13.3 28 L13.5 47 L9.6 47 L9 30 L8 30 L7.4 47 L3.5 47 L3.7 28 L3.5 18 L3 22 L2 28 L0.5 28 L0 24 L1.5 16 L2 10.5 L3.5 8.5 L7 7.5 L7 6.5 L6.2 5.5 Z" fill="#00e400" stroke="#00a000" stroke-width="1.4"/><path transform="translate(325.8,226.8) scale(0.763,0.867)" d="M6.2 1.5 Q6.2 0 8.5 0 Q10.8 0 10.8 1.5 L10.8 5.5 L10 6.5 L10 7.5 L13.5 8.5 L15 10.5 L15.5 16 L17 24 L16.5 28 L15 28 L14 22 L13.5 18 L13.3 28 L13.5 47 L9.6 47 L9 30 L8 30 L7.4 47 L3.5 47 L3.7 28 L3.5 18 L3 22 L2 28 L0.5 28 L0 24 L1.5 16 L2 10.5 L3.5 8.5 L7 7.5 L7 6.5 L6.2 5.5 Z" fill="#00e400" stroke="#00a000" stroke-width="1.4"/><polygon points="57.4,142.2 177.0,157.8 205.9,284.4 105.9,258.8" fill="#df6e08" /><g stroke="#fff" stroke-opacity="0.07" stroke-width="1" fill="none"><path d="M69.3 143.8 L115.9 261.4"/><path d="M81.3 145.3 L125.9 263.9"/><path d="M93.3 146.9 L135.9 266.5"/><path d="M105.2 148.5 L145.9 269.0"/><path d="M117.2 150.0 L155.9 271.6"/><path d="M129.1 151.6 L165.9 274.2"/><path d="M141.1 153.1 L175.9 276.7"/><path d="M153.0 154.7 L185.9 279.3"/><path d="M165.0 156.2 L195.9 281.8"/><path d="M62.2 153.9 L179.9 170.4"/><path d="M67.1 165.5 L182.8 183.1"/><path d="M71.9 177.2 L185.6 195.8"/><path d="M76.8 188.9 L188.5 208.4"/><path d="M81.6 200.5 L191.4 221.1"/><path d="M86.5 212.2 L194.3 233.8"/><path d="M91.3 223.8 L197.2 246.4"/><path d="M96.2 235.5 L200.1 259.1"/><path d="M101.0 247.2 L203.0 271.7"/></g><polygon points="57.4,142.2 79.1,135.0 195.4,149.4 177.0,157.8" fill="#e67c12" /><polygon points="177.0,157.8 195.4,149.4 220.5,269.8 205.9,284.4" fill="#dd6e0a" /><line x1="57.4" y1="142.2" x2="177.0" y2="157.8" stroke="#ffe000" stroke-width="1.3"/><line x1="177.0" y1="157.8" x2="205.9" y2="284.4" stroke="#ffe000" stroke-width="1.3"/><line x1="57.4" y1="142.2" x2="105.9" y2="258.8" stroke="#ffe000" stroke-width="1" stroke-dasharray="3 2"/><line x1="105.9" y1="258.8" x2="205.9" y2="284.4" stroke="#ffe000" stroke-width="1" stroke-dasharray="3 2"/><line x1="57.4" y1="142.2" x2="79.1" y2="135.0" stroke="#ffe000" stroke-width="1" stroke-dasharray="3 2"/><line x1="79.1" y1="135.0" x2="195.4" y2="149.4" stroke="#ffe000" stroke-width="1" stroke-dasharray="3 2"/><line x1="195.4" y1="149.4" x2="220.5" y2="269.8" stroke="#ffe000" stroke-width="1" stroke-dasharray="3 2"/><line x1="205.9" y1="284.4" x2="220.5" y2="269.8" stroke="#ffe000" stroke-width="1" stroke-dasharray="3 2"/><line x1="195.4" y1="149.4" x2="177.0" y2="157.8" stroke="#ffe000" stroke-width="1" stroke-dasharray="3 2"/><polygon points="529.1,46.4 542.0,47.9 533.3,80.1 520.5,76.4" fill="#5c5c5c" /><polygon points="559.7,52.6 582.9,54.7 567.4,100.2 546.7,94.0" fill="#5c5c5c" /><polygon points="629.4,67.1 648.0,67.1 648.0,145.7 613.9,136.4 602.9,129.1" fill="#5c5c5c" /><polygon points="511.6,103.3 556.0,105.4 564.3,112.6 563.3,118.8 538.4,116.7 516.7,115.7 510.1,109.5" fill="#5c5c5c" /><polygon points="533.3,128.1 591.2,131.8 612.9,145.7 608.7,155.0 599.4,153.9 562.2,151.9 541.5,148.8 530.2,134.3" fill="#5c5c5c" /><polygon points="536.4,114.0 552.9,115.7 565.3,124.0 565.3,129.1 542.6,127.1 535.3,120.9" fill="#e3820f" /><polygon points="576.7,144.2 601.5,145.7 597.4,156.0 633.5,169.4 629.4,180.8 593.2,177.7 561.2,160.1" fill="#e3820f" /><polygon points="575.7,176.7 648.0,183.9 648.0,229.4 601.5,223.2 571.5,187.0" fill="#5c5c5c" /><line x1="580.4" y1="106.4" x2="570.1" y2="135.3" stroke="#0000ff" stroke-width="1.2"/><line x1="537.4" y1="133.3" x2="539.9" y2="133.3" stroke="#00e000" stroke-width="1.2"/><line x1="548.8" y1="134.3" x2="556.0" y2="134.3" stroke="#00e000" stroke-width="1.2"/><line x1="564.7" y1="135.3" x2="568.4" y2="135.3" stroke="#00e000" stroke-width="1.2"/><line x1="565.9" y1="132.8" x2="568.4" y2="134.3" stroke="#e00000" stroke-width="1"/></svg></div><div class="vp" style="left:722px;top:67px;width:607px;height:414px"><svg width="607" height="414" shape-rendering="crispEdges"><g shape-rendering="geometricPrecision"><rect x="4.66" y="0" width="1.1" height="414" fill="#585858"/><rect x="25.38" y="0" width="1.1" height="414" fill="#585858"/><rect x="46.10" y="0" width="1.1" height="414" fill="#7e7e7e"/><rect x="66.81" y="0" width="1.1" height="414" fill="#585858"/><rect x="87.53" y="0" width="1.1" height="414" fill="#585858"/><rect x="108.24" y="0" width="1.1" height="414" fill="#585858"/><rect x="128.96" y="0" width="1.1" height="414" fill="#585858"/><rect x="149.68" y="0" width="1.1" height="414" fill="#585858"/><rect x="170.39" y="0" width="1.1" height="414" fill="#585858"/><rect x="191.11" y="0" width="1.1" height="414" fill="#585858"/><rect x="211.82" y="0" width="1.1" height="414" fill="#7e7e7e"/><rect x="232.54" y="0" width="1.1" height="414" fill="#585858"/><rect x="253.26" y="0" width="1.1" height="414" fill="#585858"/><rect x="273.97" y="0" width="1.1" height="414" fill="#585858"/><rect x="294.69" y="0" width="1.1" height="414" fill="#585858"/><rect x="315.40" y="0" width="1.1" height="414" fill="#585858"/><rect x="336.12" y="0" width="1.1" height="414" fill="#585858"/><rect x="356.84" y="0" width="1.1" height="414" fill="#585858"/><rect x="377.55" y="0" width="1.1" height="414" fill="#7e7e7e"/><rect x="398.27" y="0" width="1.1" height="414" fill="#585858"/><rect x="418.98" y="0" width="1.1" height="414" fill="#585858"/><rect x="439.70" y="0" width="1.1" height="414" fill="#585858"/><rect x="460.42" y="0" width="1.1" height="414" fill="#585858"/><rect x="481.13" y="0" width="1.1" height="414" fill="#585858"/><rect x="501.85" y="0" width="1.1" height="414" fill="#585858"/><rect x="522.56" y="0" width="1.1" height="414" fill="#585858"/><rect x="543.28" y="0" width="1.1" height="414" fill="#8a4408"/><rect x="564.00" y="0" width="1.1" height="414" fill="#585858"/><rect x="584.71" y="0" width="1.1" height="414" fill="#585858"/><rect x="605.43" y="0" width="1.1" height="414" fill="#585858"/><rect x="0" y="12.82" width="607" height="1.1" fill="#585858"/><rect x="0" y="33.61" width="607" height="1.1" fill="#585858"/><rect x="0" y="54.40" width="607" height="1.1" fill="#585858"/><rect x="0" y="75.19" width="607" height="1.1" fill="#7e7e7e"/><rect x="0" y="95.98" width="607" height="1.1" fill="#585858"/><rect x="0" y="116.77" width="607" height="1.1" fill="#585858"/><rect x="0" y="137.56" width="607" height="1.1" fill="#585858"/><rect x="0" y="158.36" width="607" height="1.1" fill="#585858"/><rect x="0" y="179.15" width="607" height="1.1" fill="#585858"/><rect x="0" y="199.94" width="607" height="1.1" fill="#585858"/><rect x="0" y="220.73" width="607" height="1.1" fill="#585858"/><rect x="0" y="241.52" width="607" height="1.1" fill="#005858"/><rect x="0" y="262.31" width="607" height="1.1" fill="#585858"/><rect x="0" y="283.10" width="607" height="1.1" fill="#585858"/><rect x="0" y="303.89" width="607" height="1.1" fill="#585858"/><rect x="0" y="324.68" width="607" height="1.1" fill="#585858"/><rect x="0" y="345.47" width="607" height="1.1" fill="#585858"/><rect x="0" y="366.27" width="607" height="1.1" fill="#585858"/><rect x="0" y="387.06" width="607" height="1.1" fill="#585858"/><rect x="0" y="407.85" width="607" height="1.1" fill="#7e7e7e"/></g><rect x="232.59" y="95.98" width="125.30" height="1.1" fill="#009080" shape-rendering="geometricPrecision"/><rect x="232.59" y="262.31" width="125.30" height="1.1" fill="#009080" shape-rendering="geometricPrecision"/><rect x="232.54" y="96.03" width="1.1" height="167.33" fill="#009080" shape-rendering="geometricPrecision"/><rect x="356.84" y="96.03" width="1.1" height="167.33" fill="#009080" shape-rendering="geometricPrecision"/><rect x="232" y="96" width="4" height="4" fill="#fff"/><rect x="356" y="96" width="4" height="4" fill="#fff"/><rect x="232" y="262" width="4" height="4" fill="#fff"/><rect x="356" y="262" width="4" height="4" fill="#fff"/><rect x="211.87" y="116.77" width="166.73" height="1.1" fill="#009080" shape-rendering="geometricPrecision"/><rect x="211.87" y="241.52" width="166.73" height="1.1" fill="#009080" shape-rendering="geometricPrecision"/><rect x="211.82" y="116.82" width="1.1" height="125.75" fill="#009080" shape-rendering="geometricPrecision"/><rect x="377.55" y="116.82" width="1.1" height="125.75" fill="#009080" shape-rendering="geometricPrecision"/><rect x="211" y="116" width="4" height="4" fill="#fff"/><rect x="377" y="116" width="4" height="4" fill="#fff"/><rect x="211" y="241" width="4" height="4" fill="#fff"/><rect x="377" y="241" width="4" height="4" fill="#fff"/><rect x="232" y="116" width="4" height="4" fill="#fff"/><rect x="232" y="241" width="4" height="4" fill="#fff"/><rect x="356" y="116" width="4" height="4" fill="#fff"/><rect x="356" y="241" width="4" height="4" fill="#fff"/><path transform="translate(245.8,195.1)" d="M6.2 1.5 Q6.2 0 8.5 0 Q10.8 0 10.8 1.5 L10.8 5.5 L10 6.5 L10 7.5 L13.5 8.5 L15 10.5 L15.5 16 L17 24 L17 28 L15.5 29.5 L14.5 29 L14 25 L13.5 20 L13.3 28 L13.5 47 L9.2 47 L8.8 43 L8.2 43 L8 47 L3.5 47 L3.7 28 L3.5 20 L3 25 L2.5 29 L1.5 29.5 L0 28 L0 24 L1.5 16 L2 10.5 L3.5 8.5 L7 7.5 L7 6.5 L6.2 5.5 Z" fill="#00f6f6" shape-rendering="auto"/><path transform="translate(287.2,195.1)" d="M6.2 1.5 Q6.2 0 8.5 0 Q10.8 0 10.8 1.5 L10.8 5.5 L10 6.5 L10 7.5 L13.5 8.5 L15 10.5 L15.5 16 L17 24 L17 28 L15.5 29.5 L14.5 29 L14 25 L13.5 20 L13.3 28 L13.5 47 L9.2 47 L8.8 43 L8.2 43 L8 47 L3.5 47 L3.7 28 L3.5 20 L3 25 L2.5 29 L1.5 29.5 L0 28 L0 24 L1.5 16 L2 10.5 L3.5 8.5 L7 7.5 L7 6.5 L6.2 5.5 Z" fill="#00f6f6" shape-rendering="auto"/><path transform="translate(328.7,195.1)" d="M6.2 1.5 Q6.2 0 8.5 0 Q10.8 0 10.8 1.5 L10.8 5.5 L10 6.5 L10 7.5 L13.5 8.5 L15 10.5 L15.5 16 L17 24 L17 28 L15.5 29.5 L14.5 29 L14 25 L13.5 20 L13.3 28 L13.5 47 L9.2 47 L8.8 43 L8.2 43 L8 47 L3.5 47 L3.7 28 L3.5 20 L3 25 L2.5 29 L1.5 29.5 L0 28 L0 24 L1.5 16 L2 10.5 L3.5 8.5 L7 7.5 L7 6.5 L6.2 5.5 Z" fill="#00f6f6" shape-rendering="auto"/><g shape-rendering="geometricPrecision"><rect x="356.69" y="116.62" width="125.70" height="1.4" fill="#d4d400"/><rect x="356.69" y="241.37" width="125.70" height="1.4" fill="#d4d400"/><rect x="356.69" y="116.62" width="1.4" height="126.15" fill="#d4d400"/><rect x="480.98" y="116.62" width="1.4" height="126.15" fill="#d4d400"/><rect x="371.9" y="116.62" width="10.0" height="1.4" fill="#dc0000"/><rect x="391.9" y="116.62" width="10.0" height="1.4" fill="#dc0000"/><rect x="411.9" y="116.62" width="10.0" height="1.4" fill="#dc0000"/><rect x="431.9" y="116.62" width="10.0" height="1.4" fill="#dc0000"/><rect x="451.9" y="116.62" width="10.0" height="1.4" fill="#dc0000"/><rect x="471.9" y="116.62" width="9.8" height="1.4" fill="#dc0000"/><rect x="480.98" y="117.3" width="1.4" height="0.2" fill="#dc0000"/><rect x="480.98" y="127.5" width="1.4" height="10.0" fill="#dc0000"/><rect x="480.98" y="147.5" width="1.4" height="10.0" fill="#dc0000"/><rect x="480.98" y="167.5" width="1.4" height="10.0" fill="#dc0000"/><rect x="480.98" y="187.5" width="1.4" height="10.0" fill="#dc0000"/><rect x="480.98" y="207.5" width="1.4" height="10.0" fill="#dc0000"/><rect x="480.98" y="227.5" width="1.4" height="10.0" fill="#dc0000"/><rect x="466.2" y="241.37" width="10.0" height="1.4" fill="#dc0000"/><rect x="446.2" y="241.37" width="10.0" height="1.4" fill="#dc0000"/><rect x="426.2" y="241.37" width="10.0" height="1.4" fill="#dc0000"/><rect x="406.2" y="241.37" width="10.0" height="1.4" fill="#dc0000"/><rect x="386.2" y="241.37" width="10.0" height="1.4" fill="#dc0000"/><rect x="366.2" y="241.37" width="10.0" height="1.4" fill="#dc0000"/><rect x="356.69" y="230.9" width="1.4" height="10.0" fill="#dc0000"/><rect x="356.69" y="210.9" width="1.4" height="10.0" fill="#dc0000"/><rect x="356.69" y="190.9" width="1.4" height="10.0" fill="#dc0000"/><rect x="356.69" y="170.9" width="1.4" height="10.0" fill="#dc0000"/><rect x="356.69" y="150.9" width="1.4" height="10.0" fill="#dc0000"/><rect x="356.69" y="130.9" width="1.4" height="10.0" fill="#dc0000"/><rect x="356.69" y="117.3" width="1.4" height="3.6" fill="#dc0000"/></g><rect x="356" y="116" width="4" height="4" fill="#fff"/><rect x="481" y="116" width="4" height="4" fill="#fff"/><rect x="356" y="241" width="4" height="4" fill="#fff"/><rect x="481" y="241" width="4" height="4" fill="#fff"/><rect x="377" y="116" width="4" height="4" fill="#fff"/><rect x="377" y="241" width="4" height="4" fill="#fff"/><rect x="346" y="105" width="8" height="8" fill="#fff"/><rect x="416" y="105" width="8" height="8" fill="#fff"/><rect x="485" y="105" width="8" height="8" fill="#fff"/><rect x="346" y="176" width="8" height="8" fill="#fff"/><rect x="485" y="176" width="8" height="8" fill="#fff"/><rect x="346" y="246" width="8" height="8" fill="#fff"/><rect x="416" y="246" width="8" height="8" fill="#fff"/><rect x="485" y="246" width="8" height="8" fill="#fff"/></svg><div class="t gl" style="left:0px;top:3px;font-size:15px">front (y/z)</div><div class="t gl" style="left:397px;top:84px;width:42px;text-align:center">192.0</div><div class="t gl" style="left:301px;top:173px">192.0</div></div><div class="a" style="left:1329px;top:67px;width:2px;height:415px;background:#fff"></div><div class="a" style="left:722px;top:481px;width:609px;height:1px;background:#fff"></div><div class="sb" style="left:1330px;top:67px;width:22px;height:414px"></div><div class="a" style="left:1330px;top:67px;width:1px;height:414px;background:#fafafa"></div><div class="thumb" style="left:1331px;top:263px;width:18px;height:21px"></div><svg style="left:1330px;top:67px" width="21" height="414"><path d="M5.8 13.8 L10.3 9.3 L14.8 13.8" stroke="#5a5a5a" stroke-width="2.2" fill="none"/><path d="M5.8 399.7 L10.3 404.2 L14.8 399.7" stroke="#5a5a5a" stroke-width="2.2" fill="none"/></svg><div class="sb" style="left:722px;top:482px;width:630px;height:21px"></div><div class="thumb" style="left:1026px;top:482px;width:21px;height:19px"></div><svg style="left:722px;top:482px" width="607" height="21"><path d="M12.3 4.8 L7.8 9.3 L12.3 13.8" stroke="#5a5a5a" stroke-width="2.2" fill="none"/><path d="M593.5 4.8 L598 9.3 L593.5 13.8" stroke="#5a5a5a" stroke-width="2.2" fill="none"/></svg><div class="vp" style="left:66px;top:511px;width:626px;height:457px"><svg width="626" height="457" shape-rendering="crispEdges"><g shape-rendering="geometricPrecision"><rect x="7.19" y="0" width="1.1" height="457" fill="#585858"/><rect x="50.22" y="0" width="1.1" height="457" fill="#585858"/><rect x="93.25" y="0" width="1.1" height="457" fill="#8a4408"/><rect x="136.28" y="0" width="1.1" height="457" fill="#585858"/><rect x="179.31" y="0" width="1.1" height="457" fill="#585858"/><rect x="222.34" y="0" width="1.1" height="457" fill="#585858"/><rect x="265.37" y="0" width="1.1" height="457" fill="#585858"/><rect x="308.40" y="0" width="1.1" height="457" fill="#585858"/><rect x="351.43" y="0" width="1.1" height="457" fill="#585858"/><rect x="394.46" y="0" width="1.1" height="457" fill="#585858"/><rect x="437.49" y="0" width="1.1" height="457" fill="#7e7e7e"/><rect x="480.52" y="0" width="1.1" height="457" fill="#585858"/><rect x="523.55" y="0" width="1.1" height="457" fill="#585858"/><rect x="566.58" y="0" width="1.1" height="457" fill="#585858"/><rect x="609.61" y="0" width="1.1" height="457" fill="#585858"/><rect x="0" y="28.78" width="626" height="1.1" fill="#7e7e7e"/><rect x="0" y="71.84" width="626" height="1.1" fill="#585858"/><rect x="0" y="114.90" width="626" height="1.1" fill="#585858"/><rect x="0" y="157.96" width="626" height="1.1" fill="#585858"/><rect x="0" y="201.02" width="626" height="1.1" fill="#585858"/><rect x="0" y="244.08" width="626" height="1.1" fill="#585858"/><rect x="0" y="287.14" width="626" height="1.1" fill="#585858"/><rect x="0" y="330.20" width="626" height="1.1" fill="#585858"/><rect x="0" y="373.26" width="626" height="1.1" fill="#7e7e7e"/><rect x="0" y="416.32" width="626" height="1.1" fill="#585858"/></g><rect x="136.33" y="28.78" width="259.18" height="1.1" fill="#009080" shape-rendering="geometricPrecision"/><rect x="136.33" y="373.26" width="259.18" height="1.1" fill="#009080" shape-rendering="geometricPrecision"/><rect x="136.28" y="28.83" width="1.1" height="345.48" fill="#009080" shape-rendering="geometricPrecision"/><rect x="394.46" y="28.83" width="1.1" height="345.48" fill="#009080" shape-rendering="geometricPrecision"/><rect x="136" y="28" width="4" height="4" fill="#fff"/><rect x="394" y="28" width="4" height="4" fill="#fff"/><rect x="136" y="373" width="4" height="4" fill="#fff"/><rect x="394" y="373" width="4" height="4" fill="#fff"/><rect x="136.33" y="71.84" width="302.21" height="1.1" fill="#009080" shape-rendering="geometricPrecision"/><rect x="136.33" y="330.20" width="302.21" height="1.1" fill="#009080" shape-rendering="geometricPrecision"/><rect x="136.28" y="71.89" width="1.1" height="259.36" fill="#009080" shape-rendering="geometricPrecision"/><rect x="437.49" y="71.89" width="1.1" height="259.36" fill="#009080" shape-rendering="geometricPrecision"/><rect x="136" y="71" width="4" height="4" fill="#fff"/><rect x="437" y="71" width="4" height="4" fill="#fff"/><rect x="136" y="330" width="4" height="4" fill="#fff"/><rect x="437" y="330" width="4" height="4" fill="#fff"/><rect x="394" y="71" width="4" height="4" fill="#fff"/><rect x="394" y="330" width="4" height="4" fill="#fff"/><path transform="translate(180.4,116.0)" d="M0 -18.5 L3.5 -15 L3.8 -9 L10.3 -8.5 L10.3 -6 L7.5 -5.5 L6.5 -3 L6.5 3 L7.5 5.5 L10.3 6 L10.3 8.5 L3.8 9 L3.5 15 L0 18.5 L-4 15.5 L-5 10 L-8 8 L-9.7 3 L-9.7 -3 L-8 -8 L-5 -10 L-4 -15.5 Z" fill="#00f6f6" shape-rendering="auto"/><path transform="translate(266.4,116.0)" d="M0 -18.5 L3.5 -15 L3.8 -9 L10.3 -8.5 L10.3 -6 L7.5 -5.5 L6.5 -3 L6.5 3 L7.5 5.5 L10.3 6 L10.3 8.5 L3.8 9 L3.5 15 L0 18.5 L-4 15.5 L-5 10 L-8 8 L-9.7 3 L-9.7 -3 L-8 -8 L-5 -10 L-4 -15.5 Z" fill="#00f6f6" shape-rendering="auto"/><path transform="translate(352.5,116.0)" d="M0 -18.5 L3.5 -15 L3.8 -9 L10.3 -8.5 L10.3 -6 L7.5 -5.5 L6.5 -3 L6.5 3 L7.5 5.5 L10.3 6 L10.3 8.5 L3.8 9 L3.5 15 L0 18.5 L-4 15.5 L-5 10 L-8 8 L-9.7 3 L-9.7 -3 L-8 -8 L-5 -10 L-4 -15.5 Z" fill="#00f6f6" shape-rendering="auto"/><path transform="translate(180.4,202.1)" d="M0 -18.5 L3.5 -15 L3.8 -9 L10.3 -8.5 L10.3 -6 L7.5 -5.5 L6.5 -3 L6.5 3 L7.5 5.5 L10.3 6 L10.3 8.5 L3.8 9 L3.5 15 L0 18.5 L-4 15.5 L-5 10 L-8 8 L-9.7 3 L-9.7 -3 L-8 -8 L-5 -10 L-4 -15.5 Z" fill="#00f6f6" shape-rendering="auto"/><path transform="translate(266.4,202.1)" d="M0 -18.5 L3.5 -15 L3.8 -9 L10.3 -8.5 L10.3 -6 L7.5 -5.5 L6.5 -3 L6.5 3 L7.5 5.5 L10.3 6 L10.3 8.5 L3.8 9 L3.5 15 L0 18.5 L-4 15.5 L-5 10 L-8 8 L-9.7 3 L-9.7 -3 L-8 -8 L-5 -10 L-4 -15.5 Z" fill="#00f6f6" shape-rendering="auto"/><path transform="translate(352.5,202.1)" d="M0 -18.5 L3.5 -15 L3.8 -9 L10.3 -8.5 L10.3 -6 L7.5 -5.5 L6.5 -3 L6.5 3 L7.5 5.5 L10.3 6 L10.3 8.5 L3.8 9 L3.5 15 L0 18.5 L-4 15.5 L-5 10 L-8 8 L-9.7 3 L-9.7 -3 L-8 -8 L-5 -10 L-4 -15.5 Z" fill="#00f6f6" shape-rendering="auto"/><path transform="translate(180.4,288.2)" d="M0 -18.5 L3.5 -15 L3.8 -9 L10.3 -8.5 L10.3 -6 L7.5 -5.5 L6.5 -3 L6.5 3 L7.5 5.5 L10.3 6 L10.3 8.5 L3.8 9 L3.5 15 L0 18.5 L-4 15.5 L-5 10 L-8 8 L-9.7 3 L-9.7 -3 L-8 -8 L-5 -10 L-4 -15.5 Z" fill="#00f6f6" shape-rendering="auto"/><path transform="translate(266.4,288.2)" d="M0 -18.5 L3.5 -15 L3.8 -9 L10.3 -8.5 L10.3 -6 L7.5 -5.5 L6.5 -3 L6.5 3 L7.5 5.5 L10.3 6 L10.3 8.5 L3.8 9 L3.5 15 L0 18.5 L-4 15.5 L-5 10 L-8 8 L-9.7 3 L-9.7 -3 L-8 -8 L-5 -10 L-4 -15.5 Z" fill="#00f6f6" shape-rendering="auto"/><path transform="translate(352.5,288.2)" d="M0 -18.5 L3.5 -15 L3.8 -9 L10.3 -8.5 L10.3 -6 L7.5 -5.5 L6.5 -3 L6.5 3 L7.5 5.5 L10.3 6 L10.3 8.5 L3.8 9 L3.5 15 L0 18.5 L-4 15.5 L-5 10 L-8 8 L-9.7 3 L-9.7 -3 L-8 -8 L-5 -10 L-4 -15.5 Z" fill="#00f6f6" shape-rendering="auto"/><path d="M261.42 46.360000000000014 L271.42 56.360000000000014 M271.42 46.360000000000014 L261.42 56.360000000000014" stroke="#007068" stroke-width="1" fill="none" shape-rendering="auto"/><path d="M261.42 197.07000000000005 L271.42 207.07000000000005 M271.42 197.07000000000005 L261.42 207.07000000000005" stroke="#007068" stroke-width="1" fill="none" shape-rendering="auto"/><path d="M412.02500000000003 197.07000000000005 L422.02500000000003 207.07000000000005 M422.02500000000003 197.07000000000005 L412.02500000000003 207.07000000000005" stroke="#007068" stroke-width="1" fill="none" shape-rendering="auto"/><path d="M261.42 347.7800000000001 L271.42 357.7800000000001 M271.42 347.7800000000001 L261.42 357.7800000000001" stroke="#007068" stroke-width="1" fill="none" shape-rendering="auto"/><g shape-rendering="geometricPrecision"><rect x="50.07" y="-0.70" width="1.4" height="73.79" fill="#d4d400"/><rect x="50.07" y="10.0" width="1.4" height="10.0" fill="#dc0000"/><rect x="50.07" y="30.0" width="1.4" height="10.0" fill="#dc0000"/><rect x="50.07" y="50.0" width="1.4" height="10.0" fill="#dc0000"/><rect x="50.07" y="70.0" width="1.4" height="2.4" fill="#dc0000"/></g><g shape-rendering="geometricPrecision"><rect x="93.10" y="-0.70" width="1.4" height="73.79" fill="#d4d400"/><rect x="93.10" y="10.0" width="1.4" height="10.0" fill="#dc0000"/><rect x="93.10" y="30.0" width="1.4" height="10.0" fill="#dc0000"/><rect x="93.10" y="50.0" width="1.4" height="10.0" fill="#dc0000"/><rect x="93.10" y="70.0" width="1.4" height="2.4" fill="#dc0000"/></g><g shape-rendering="geometricPrecision"><rect x="50.07" y="71.69" width="44.43" height="1.4" fill="#d4d400"/><rect x="65.8" y="71.69" width="10.0" height="1.4" fill="#dc0000"/><rect x="85.8" y="71.69" width="8.0" height="1.4" fill="#dc0000"/></g><rect x="50" y="71" width="4" height="4" fill="#fff"/><rect x="93" y="71" width="4" height="4" fill="#fff"/><rect x="39" y="76" width="8" height="8" fill="#fff"/><rect x="68" y="76" width="8" height="8" fill="#fff"/><rect x="97" y="76" width="8" height="8" fill="#fff"/></svg><div class="t ent" style="left:157.4px;top:73.0px">info_player_start</div><div class="t ent" style="left:243.4px;top:73.0px">info_player_start</div><div class="t ent" style="left:329.5px;top:73.0px">info_player_start</div><div class="t ent" style="left:157.4px;top:159.1px">info_player_start</div><div class="t ent" style="left:243.4px;top:159.1px">info_player_start</div><div class="t ent" style="left:329.5px;top:159.1px">info_player_start</div><div class="t ent" style="left:157.4px;top:245.2px">info_player_start</div><div class="t ent" style="left:243.4px;top:245.2px">info_player_start</div><div class="t ent" style="left:329.5px;top:245.2px">info_player_start</div></div><div class="a" style="left:692px;top:511px;width:2px;height:459px;background:#fff"></div><div class="a" style="left:66px;top:968px;width:628px;height:2px;background:#fff"></div><div class="sb" style="left:693px;top:511px;width:22px;height:457px"></div><div class="a" style="left:693px;top:511px;width:1px;height:457px;background:#fafafa"></div><div class="thumb" style="left:693px;top:722px;width:19px;height:21px"></div><svg style="left:693px;top:511px" width="21" height="457"><path d="M5.8 13.8 L10.3 9.3 L14.8 13.8" stroke="#5a5a5a" stroke-width="2.2" fill="none"/><path d="M5.8 444.7 L10.3 449.2 L14.8 444.7" stroke="#5a5a5a" stroke-width="2.2" fill="none"/></svg><div class="sb" style="left:66px;top:970px;width:649px;height:21px"></div><div class="thumb" style="left:353px;top:970px;width:21px;height:18px"></div><svg style="left:66px;top:970px" width="626" height="21"><path d="M12.3 4.8 L7.8 9.3 L12.3 13.8" stroke="#5a5a5a" stroke-width="2.2" fill="none"/><path d="M612.5 4.8 L617 9.3 L612.5 13.8" stroke="#5a5a5a" stroke-width="2.2" fill="none"/></svg><div class="vp" style="left:722px;top:511px;width:607px;height:457px"><svg width="607" height="457" shape-rendering="crispEdges"><g shape-rendering="geometricPrecision"><rect x="27.61" y="0" width="1.1" height="457" fill="#585858"/><rect x="57.49" y="0" width="1.1" height="457" fill="#585858"/><rect x="87.36" y="0" width="1.1" height="457" fill="#585858"/><rect x="117.24" y="0" width="1.1" height="457" fill="#8a4408"/><rect x="147.12" y="0" width="1.1" height="457" fill="#585858"/><rect x="176.99" y="0" width="1.1" height="457" fill="#585858"/><rect x="206.87" y="0" width="1.1" height="457" fill="#585858"/><rect x="236.74" y="0" width="1.1" height="457" fill="#585858"/><rect x="266.62" y="0" width="1.1" height="457" fill="#585858"/><rect x="296.50" y="0" width="1.1" height="457" fill="#585858"/><rect x="326.37" y="0" width="1.1" height="457" fill="#585858"/><rect x="356.25" y="0" width="1.1" height="457" fill="#7e7e7e"/><rect x="386.12" y="0" width="1.1" height="457" fill="#585858"/><rect x="416.00" y="0" width="1.1" height="457" fill="#585858"/><rect x="445.88" y="0" width="1.1" height="457" fill="#585858"/><rect x="475.75" y="0" width="1.1" height="457" fill="#585858"/><rect x="505.63" y="0" width="1.1" height="457" fill="#585858"/><rect x="535.50" y="0" width="1.1" height="457" fill="#585858"/><rect x="565.38" y="0" width="1.1" height="457" fill="#585858"/><rect x="595.26" y="0" width="1.1" height="457" fill="#7e7e7e"/><rect x="0" y="6.15" width="607" height="1.1" fill="#585858"/><rect x="0" y="36.10" width="607" height="1.1" fill="#585858"/><rect x="0" y="66.04" width="607" height="1.1" fill="#7e7e7e"/><rect x="0" y="95.99" width="607" height="1.1" fill="#585858"/><rect x="0" y="125.94" width="607" height="1.1" fill="#585858"/><rect x="0" y="155.88" width="607" height="1.1" fill="#585858"/><rect x="0" y="185.83" width="607" height="1.1" fill="#585858"/><rect x="0" y="215.78" width="607" height="1.1" fill="#585858"/><rect x="0" y="245.73" width="607" height="1.1" fill="#585858"/><rect x="0" y="275.67" width="607" height="1.1" fill="#585858"/><rect x="0" y="305.62" width="607" height="1.1" fill="#005858"/><rect x="0" y="335.57" width="607" height="1.1" fill="#585858"/><rect x="0" y="365.51" width="607" height="1.1" fill="#585858"/><rect x="0" y="395.46" width="607" height="1.1" fill="#585858"/><rect x="0" y="425.41" width="607" height="1.1" fill="#585858"/><rect x="0" y="455.35" width="607" height="1.1" fill="#585858"/></g><rect x="147.17" y="95.99" width="180.26" height="1.1" fill="#009080" shape-rendering="geometricPrecision"/><rect x="147.17" y="335.57" width="180.26" height="1.1" fill="#009080" shape-rendering="geometricPrecision"/><rect x="147.12" y="96.04" width="1.1" height="240.58" fill="#009080" shape-rendering="geometricPrecision"/><rect x="326.37" y="96.04" width="1.1" height="240.58" fill="#009080" shape-rendering="geometricPrecision"/><rect x="147" y="96" width="4" height="4" fill="#fff"/><rect x="326" y="96" width="4" height="4" fill="#fff"/><rect x="147" y="335" width="4" height="4" fill="#fff"/><rect x="326" y="335" width="4" height="4" fill="#fff"/><rect x="147.17" y="125.94" width="210.13" height="1.1" fill="#009080" shape-rendering="geometricPrecision"/><rect x="147.17" y="305.62" width="210.13" height="1.1" fill="#009080" shape-rendering="geometricPrecision"/><rect x="147.12" y="125.99" width="1.1" height="180.68" fill="#009080" shape-rendering="geometricPrecision"/><rect x="356.25" y="125.99" width="1.1" height="180.68" fill="#009080" shape-rendering="geometricPrecision"/><rect x="147" y="125" width="4" height="4" fill="#fff"/><rect x="356" y="125" width="4" height="4" fill="#fff"/><rect x="147" y="305" width="4" height="4" fill="#fff"/><rect x="356" y="305" width="4" height="4" fill="#fff"/><rect x="326" y="125" width="4" height="4" fill="#fff"/><rect x="326" y="305" width="4" height="4" fill="#fff"/><rect x="535.55" y="66.04" width="71.95" height="1.1" fill="#00b48c" shape-rendering="geometricPrecision"/><rect x="535.55" y="185.83" width="71.95" height="1.1" fill="#00b48c" shape-rendering="geometricPrecision"/><rect x="535.50" y="66.09" width="1.1" height="120.79" fill="#00b48c" shape-rendering="geometricPrecision"/><rect x="535" y="66" width="4" height="4" fill="#fff"/><rect x="535" y="185" width="4" height="4" fill="#fff"/><rect x="505.68" y="335.57" width="101.82" height="1.1" fill="#009080" shape-rendering="geometricPrecision"/><rect x="505.63" y="305.67" width="1.1" height="30.95" fill="#009080" shape-rendering="geometricPrecision"/><rect x="505" y="305" width="4" height="4" fill="#fff"/><rect x="505" y="335" width="4" height="4" fill="#fff"/><rect x="590" y="123" width="10" height="4" fill="none" stroke="#4a8ae0" stroke-width="1"/><path transform="translate(178.0,239.2)" d="M-4.3 1 L-3 0 L4 0 L5.5 1 L6.5 9 L7 10.5 L2.5 10.5 L3 12 L5 14 L5.5 19 L4.5 24 L4.5 30 L4 36 L3.5 42 L3.5 55 L3 62 L7.5 64.5 L8 67 L-2.7 67 L-2.7 55 L-3 42 L-3.5 34 L-5 28 L-5.7 18 L-5 13 L-2 11.5 L-2.5 10.5 L-4.3 9 Z" fill="#00f6f6" shape-rendering="auto"/><path transform="translate(237.8,239.2)" d="M-4.3 1 L-3 0 L4 0 L5.5 1 L6.5 9 L7 10.5 L2.5 10.5 L3 12 L5 14 L5.5 19 L4.5 24 L4.5 30 L4 36 L3.5 42 L3.5 55 L3 62 L7.5 64.5 L8 67 L-2.7 67 L-2.7 55 L-3 42 L-3.5 34 L-5 28 L-5.7 18 L-5 13 L-2 11.5 L-2.5 10.5 L-4.3 9 Z" fill="#00f6f6" shape-rendering="auto"/><path transform="translate(297.5,239.2)" d="M-4.3 1 L-3 0 L4 0 L5.5 1 L6.5 9 L7 10.5 L2.5 10.5 L3 12 L5 14 L5.5 19 L4.5 24 L4.5 30 L4 36 L3.5 42 L3.5 55 L3 62 L7.5 64.5 L8 67 L-2.7 67 L-2.7 55 L-3 42 L-3.5 34 L-5 28 L-5.7 18 L-5 13 L-2 11.5 L-2.5 10.5 L-4.3 9 Z" fill="#00f6f6" shape-rendering="auto"/><g shape-rendering="geometricPrecision"><rect x="87.21" y="125.79" width="31.28" height="1.4" fill="#d4d400"/><rect x="87.21" y="305.47" width="31.28" height="1.4" fill="#d4d400"/><rect x="87.21" y="125.79" width="1.4" height="181.08" fill="#d4d400"/><rect x="117.09" y="125.79" width="1.4" height="181.08" fill="#d4d400"/><rect x="102.4" y="125.79" width="10.0" height="1.4" fill="#dc0000"/><rect x="117.09" y="131.1" width="1.4" height="10.0" fill="#dc0000"/><rect x="117.09" y="151.1" width="1.4" height="10.0" fill="#dc0000"/><rect x="117.09" y="171.1" width="1.4" height="10.0" fill="#dc0000"/><rect x="117.09" y="191.1" width="1.4" height="10.0" fill="#dc0000"/><rect x="117.09" y="211.1" width="1.4" height="10.0" fill="#dc0000"/><rect x="117.09" y="231.1" width="1.4" height="10.0" fill="#dc0000"/><rect x="117.09" y="251.1" width="1.4" height="10.0" fill="#dc0000"/><rect x="117.09" y="271.1" width="1.4" height="10.0" fill="#dc0000"/><rect x="117.09" y="291.1" width="1.4" height="10.0" fill="#dc0000"/><rect x="102.8" y="305.47" width="10.0" height="1.4" fill="#dc0000"/><rect x="87.9" y="305.47" width="4.9" height="1.4" fill="#dc0000"/><rect x="87.21" y="301.1" width="1.4" height="5.1" fill="#dc0000"/><rect x="87.21" y="281.1" width="1.4" height="10.0" fill="#dc0000"/><rect x="87.21" y="261.1" width="1.4" height="10.0" fill="#dc0000"/><rect x="87.21" y="241.1" width="1.4" height="10.0" fill="#dc0000"/><rect x="87.21" y="221.1" width="1.4" height="10.0" fill="#dc0000"/><rect x="87.21" y="201.1" width="1.4" height="10.0" fill="#dc0000"/><rect x="87.21" y="181.1" width="1.4" height="10.0" fill="#dc0000"/><rect x="87.21" y="161.1" width="1.4" height="10.0" fill="#dc0000"/><rect x="87.21" y="141.1" width="1.4" height="10.0" fill="#dc0000"/><rect x="87.21" y="126.5" width="1.4" height="4.6" fill="#dc0000"/></g><rect x="87" y="125" width="4" height="4" fill="#fff"/><rect x="117" y="125" width="4" height="4" fill="#fff"/><rect x="87" y="305" width="4" height="4" fill="#fff"/><rect x="117" y="305" width="4" height="4" fill="#fff"/><rect x="76" y="115" width="8" height="8" fill="#fff"/><rect x="99" y="115" width="8" height="8" fill="#fff"/><rect x="121" y="115" width="8" height="8" fill="#fff"/><rect x="76" y="212" width="8" height="8" fill="#fff"/><rect x="121" y="212" width="8" height="8" fill="#fff"/><rect x="76" y="310" width="8" height="8" fill="#fff"/><rect x="99" y="310" width="8" height="8" fill="#fff"/><rect x="121" y="310" width="8" height="8" fill="#fff"/></svg><div class="t gl" style="left:86px;top:93px">32.0</div><div class="t gl" style="left:31px;top:209px">192.0</div></div><div class="a" style="left:1329px;top:511px;width:2px;height:459px;background:#fff"></div><div class="a" style="left:722px;top:968px;width:609px;height:2px;background:#fff"></div><div class="sb" style="left:1330px;top:511px;width:22px;height:457px"></div><div class="a" style="left:1330px;top:511px;width:1px;height:457px;background:#fafafa"></div><div class="thumb" style="left:1331px;top:729px;width:18px;height:21px"></div><svg style="left:1330px;top:511px" width="21" height="457"><path d="M5.8 13.8 L10.3 9.3 L14.8 13.8" stroke="#5a5a5a" stroke-width="2.2" fill="none"/><path d="M5.8 444.7 L10.3 449.2 L14.8 444.7" stroke="#5a5a5a" stroke-width="2.2" fill="none"/></svg><div class="sb" style="left:722px;top:970px;width:630px;height:21px"></div><div class="thumb" style="left:1002px;top:970px;width:21px;height:18px"></div><svg style="left:722px;top:970px" width="607" height="21"><path d="M12.3 4.8 L7.8 9.3 L12.3 13.8" stroke="#5a5a5a" stroke-width="2.2" fill="none"/><path d="M593.5 4.8 L598 9.3 L593.5 13.8" stroke="#5a5a5a" stroke-width="2.2" fill="none"/></svg><!-- frames / splitters -->
<!-- outer sunken edge: top & left -->
<div class="a" style="left:64px;top:65px;width:1289px;height:1px;background:#a0a0a0"></div>
<div class="a" style="left:64px;top:66px;width:1288px;height:1px;background:#696969"></div>
<div class="a" style="left:64px;top:65px;width:1px;height:926px;background:#a0a0a0"></div>
<div class="a" style="left:65px;top:66px;width:1px;height:924px;background:#696969"></div>
<div class="a" style="left:63px;top:66px;width:1px;height:579px;background:#fff"></div>
<!-- vertical splitter x 713..721 -->
<div class="a" style="left:713px;top:67px;width:2px;height:923px;background:#fff"></div>
<div class="a" style="left:715px;top:67px;width:4px;height:923px;background:#f8f8f8"></div>
<div class="a" style="left:719px;top:67px;width:1px;height:923px;background:#d4d4d4"></div>
<div class="a" style="left:720px;top:67px;width:1px;height:923px;background:#a0a0a0"></div>
<div class="a" style="left:721px;top:67px;width:1px;height:923px;background:#696969"></div>
<!-- horizontal splitter y 502..510 -->
<div class="a" style="left:66px;top:502px;width:1286px;height:2px;background:#fff"></div>
<div class="a" style="left:66px;top:504px;width:1286px;height:4px;background:#f8f8f8"></div>
<div class="a" style="left:66px;top:508px;width:1286px;height:1px;background:#d4d4d4"></div>
<div class="a" style="left:66px;top:509px;width:1286px;height:1px;background:#a0a0a0"></div>
<div class="a" style="left:66px;top:510px;width:1286px;height:1px;background:#696969"></div>
<!-- center crossing -->
<div class="a" style="left:713px;top:502px;width:9px;height:9px;background:#f8f8f8"></div>
<div class="a" style="left:714px;top:65px;width:5px;height:2px;background:#f8f8f8"></div>
<div class="a" style="left:713px;top:67px;width:2px;height:437px;background:#fff"></div>
<!-- outer right/bottom -->
<div class="a" style="left:1352px;top:66px;width:1px;height:925px;background:#fff"></div>
<div class="a" style="left:64px;top:990px;width:1289px;height:1px;background:#f0f0f0"></div>
<!-- right panel -->
<style>
.d{position:absolute;margin-top:-1px;white-space:nowrap;line-height:1;font-size:15px;transform:scaleX(.87);transform-origin:0 0}
.bt{position:absolute;background:#f0f0f0;border:1px solid;border-color:#fff #696969 #696969 #fff;box-shadow:inset -1px -1px 0 #a0a0a0}
.bt span{position:absolute;margin-top:-2px;left:0;right:0;text-align:center;white-space:nowrap;line-height:1;font-size:15px;transform:scaleX(.87)}
.cb{position:absolute;border:1px solid;border-color:#a0a0a0 #fff #fff #a0a0a0;box-shadow:inset 1px 1px 0 #696969,inset -1px -1px 0 #e3e3e3}
.cbb{position:absolute;background:#f0f0f0;border:1px solid;border-color:#fff #696969 #696969 #fff;box-shadow:inset -1px -1px 0 #a0a0a0}
.hl{position:absolute;height:1px;background:#a0a0a0}
.vl{position:absolute;width:1px;background:#a0a0a0}
</style>
<!-- column backgrounds -->
<div class="a" style="left:1353px;top:66px;width:187px;height:124px;background:#f0f0f0"></div>
<div class="a" style="left:1353px;top:269px;width:187px;height:213px;background:#f0f0f0"></div>
<div class="a" style="left:1353px;top:484px;width:187px;height:275px;background:#f0f0f0"></div>
<div class="a" style="left:1542px;top:66px;width:186px;height:205px;background:#f0f0f0"></div>
<div class="a" style="left:1730px;top:66px;width:187px;height:275px;background:#f0f0f0"></div>
<!-- lines -->
<div class="hl" style="left:1352px;top:65px;width:565px;background:#b0b0b0"></div>
<div class="hl" style="left:1353px;top:189px;width:188px"></div>
<div class="hl" style="left:1353px;top:268px;width:188px"></div>
<div class="hl" style="left:1353px;top:481px;width:188px"></div>
<div class="hl" style="left:1353px;top:483px;width:188px;background:#c8c8c8"></div>
<div class="hl" style="left:1353px;top:758px;width:188px"></div>
<div class="hl" style="left:1542px;top:271px;width:187px"></div>
<div class="vl" style="left:1540px;top:66px;height:693px"></div>
<div class="vl" style="left:1728px;top:66px;height:276px"></div>
<div class="hl" style="left:1353px;top:990px;width:564px"></div>

<!-- Select panel -->
<div class="d" style="left:1365px;top:79px">Select:</div>
<div class="a" style="left:1364px;top:100px;width:165px;height:18px;background:#f8f8f8;border:1px solid;border-color:#696969 #fff #fff #696969;box-shadow:inset 1px 1px 0 #a0a0a0"></div>
<div class="d" style="left:1425px;top:102px">Groups</div>
<div class="bt" style="left:1364px;top:130px;width:166px;height:20px"><span style="top:2px">Objects</span></div>
<div class="bt" style="left:1364px;top:158px;width:166px;height:20px"><span style="top:2px">Solids</span></div>

<!-- Texture panel -->
<div class="d" style="left:1358px;top:272px">Texture group:</div>
<div class="cb" style="left:1364px;top:290px;width:171px;height:24px;background:#fff"></div>
<div class="d" style="left:1369px;top:295px">All Textures</div>
<div class="cbb" style="left:1513px;top:292px;width:20px;height:20px"></div>
<svg style="left:1518px;top:299px" width="10" height="6"><path d="M0 0 L10 0 L5 5.5 Z" fill="#000"/></svg>
<div class="d" style="left:1358px;top:320px">Current texture:</div>
<div class="cb" style="left:1364px;top:337px;width:171px;height:27px;background:#fff"></div>
<div class="t" style="left:1374px;top:343px;font-size:14px;width:139px;overflow:hidden">dev/dev_blendmeasure</div>
<div class="cbb" style="left:1513px;top:339px;width:20px;height:23px"></div>
<svg style="left:1518px;top:348px" width="10" height="6"><path d="M0 0 L10 0 L5 5.5 Z" fill="#000"/></svg>
<div class="a" style="left:1365px;top:371px;width:92px;height:100px;background:#5c5a58;border:1px solid #707070;border-right-color:#fff;border-bottom-color:#fff"></div>
<div class="a" style="left:1411px;top:372px;width:1px;height:98px;background:#6e6c6a"></div>
<div class="a" style="left:1366px;top:421px;width:90px;height:1px;background:#6e6c6a"></div>
<div class="d" style="left:1463px;top:375px">128x128</div>
<div class="bt" style="left:1462px;top:407px;width:75px;height:29px;border-color:#303030;box-shadow:inset 1px 1px 0 #fff,inset -1px -1px 0 #696969,inset -2px -2px 0 #a0a0a0"><span style="top:7px"><u>B</u>rowse...</span></div>
<div class="bt" style="left:1462px;top:442px;width:75px;height:29px"><span style="top:7px"><u>R</u>eplace...</span></div>

<!-- VisGroups -->
<div class="d" style="left:1358px;top:487px">VisGroups:</div>
<div class="a" style="left:1357px;top:530px;width:179px;height:198px;border:1px solid;border-color:#fff #696969 #696969 #fff;box-shadow:inset -1px -1px 0 #a0a0a0;background:#f0f0f0"></div>
<div class="a" style="left:1358px;top:505px;width:56px;height:27px;background:#f0f0f0;border:1px solid;border-color:#fff #696969 #f0f0f0 #fff;box-shadow:inset -1px 0 0 #a0a0a0"></div>
<div class="d" style="left:1367px;top:509px">User</div>
<div class="a" style="left:1414px;top:508px;width:50px;height:22px;background:#f0f0f0;border:1px solid;border-color:#fff #696969 transparent #f0f0f0;box-shadow:inset -1px 0 0 #a0a0a0"></div>
<div class="d" style="left:1419px;top:512px">Auto</div>
<div class="cb" style="left:1361px;top:534px;width:168px;height:190px;background:#fff"></div>
<div class="bt" style="left:1353px;top:734px;width:45px;height:23px"><span style="top:4px"><u>S</u>how</span></div>
<div class="bt" style="left:1400px;top:734px;width:45px;height:23px"><span style="top:4px"><u>E</u>dit</span></div>
<div class="bt" style="left:1447px;top:734px;width:45px;height:23px"><span style="top:4px"><u>M</u>ark</span></div>
<div class="bt" style="left:1495px;top:734px;width:22px;height:23px"></div>
<div class="bt" style="left:1518px;top:734px;width:22px;height:23px"></div>
<svg style="left:1500px;top:739px" width="12" height="13"><path d="M6 0 L12 6 L8 6 L8 13 L4 13 L4 6 L0 6 Z" fill="#000"/></svg>
<svg style="left:1523px;top:739px" width="12" height="13"><path d="M6 13 L12 7 L8 7 L8 0 L4 0 L4 7 L0 7 Z" fill="#000"/></svg>

<!-- Prefab panel -->
<div class="d" style="left:1546px;top:69px">Move</div>
<div class="d" style="left:1546px;top:85px">selected:</div>
<div class="bt" style="left:1603px;top:71px;width:61px;height:29px"><span style="top:7px">to<u>W</u>orld</span></div>
<div class="bt" style="left:1666px;top:71px;width:60px;height:29px"><span style="top:7px">to<u>E</u>ntity</span></div>
<div class="d" style="left:1547px;top:108px"><u>C</u>ategories:</div>
<div class="cb" style="left:1545px;top:126px;width:178px;height:25px;background:#f0f0f0"></div>
<div class="cbb" style="left:1701px;top:128px;width:20px;height:21px"></div>
<svg style="left:1706px;top:136px" width="10" height="6"><path d="M0 0 L10 0 L5 5.5 Z" fill="#a0a0a0"/></svg>
<div class="d" style="left:1546px;top:157px"><u>O</u>bjects:</div>
<div class="cb" style="left:1545px;top:176px;width:178px;height:26px;background:#f0f0f0"></div>
<div class="cbb" style="left:1701px;top:178px;width:20px;height:22px"></div>
<svg style="left:1706px;top:186px" width="10" height="6"><path d="M0 0 L10 0 L5 5.5 Z" fill="#a0a0a0"/></svg>
<div class="cb" style="left:1546px;top:213px;width:15px;height:15px;background:#fff"></div>
<div class="d" style="left:1569px;top:213px">Random Yaw</div>
<div class="bt" style="left:1568px;top:240px;width:135px;height:28px"><span style="top:6px"><u>C</u>reate Prefab</span></div>

<!-- Manifest -->
<div class="a" style="left:1729px;top:66px;width:188px;height:1px;background:#fff"></div>
<div class="d" style="left:1736px;top:70px">Manifest:</div>
<div class="a" style="left:1728px;top:87px;width:189px;height:255px;background:#f0f0f0;border:1px solid;border-color:#a0a0a0 #e3e3e3 #e3e3e3 #a0a0a0;box-shadow:inset 1px 1px 0 #696969"></div>
<!-- status bar -->
<style>
.sp{position:absolute;top:995px;height:19px;border:1px solid;border-color:#a0a0a0 #fff #fff #a0a0a0}
.st{position:absolute;top:998px;white-space:nowrap;line-height:1;font-size:15px}
</style>
<div class="a" style="left:0;top:991px;width:1920px;height:2px;background:#fff"></div>
<div class="a" style="left:0;top:993px;width:1920px;height:23px;background:#f0f0f0"></div>
<div class="a" style="left:0;top:1015px;width:1920px;height:1px;background:#000"></div>
<div class="sp" style="left:0;width:799px;border-left:none"></div>
<div class="sp" style="left:802px;width:383px"></div>
<div class="sp" style="left:1187px;width:133px"></div>
<div class="sp" style="left:1322px;width:233px"></div>
<div class="sp" style="left:1557px;width:108px"></div>
<div class="sp" style="left:1667px;width:176px"></div>
<div class="sp" style="left:1845px;width:71px"></div>
<div class="st" style="left:0px;letter-spacing:-.57px">For Help, press F1</div>
<div class="st" style="left:806px;letter-spacing:-.185px">solid with 6 faces&nbsp;&nbsp;&nbsp;[dist: 529.0]</div>
<div class="st" style="left:1195px;letter-spacing:-.76px">@-692, 501</div>
<div class="st" style="left:1330px;letter-spacing:-.58px">32w 192l 192h @(-1040 832 96)</div>
<div class="st" style="left:1565px;letter-spacing:-.24px">Zoom: 1.07</div>
<div class="st" style="left:1675px;letter-spacing:-.49px">Snap: On Grid: 32</div>
<div class="st" style="left:1850px;letter-spacing:.5px">&lt;-&gt;</div>
<div class="a" style="left:0;top:989px;width:64px;height:1px;background:#a0a0a0"></div>
<div class="a" style="left:1917px;top:991px;width:3px;height:24px;background:#fff"></div>
</body></html>
